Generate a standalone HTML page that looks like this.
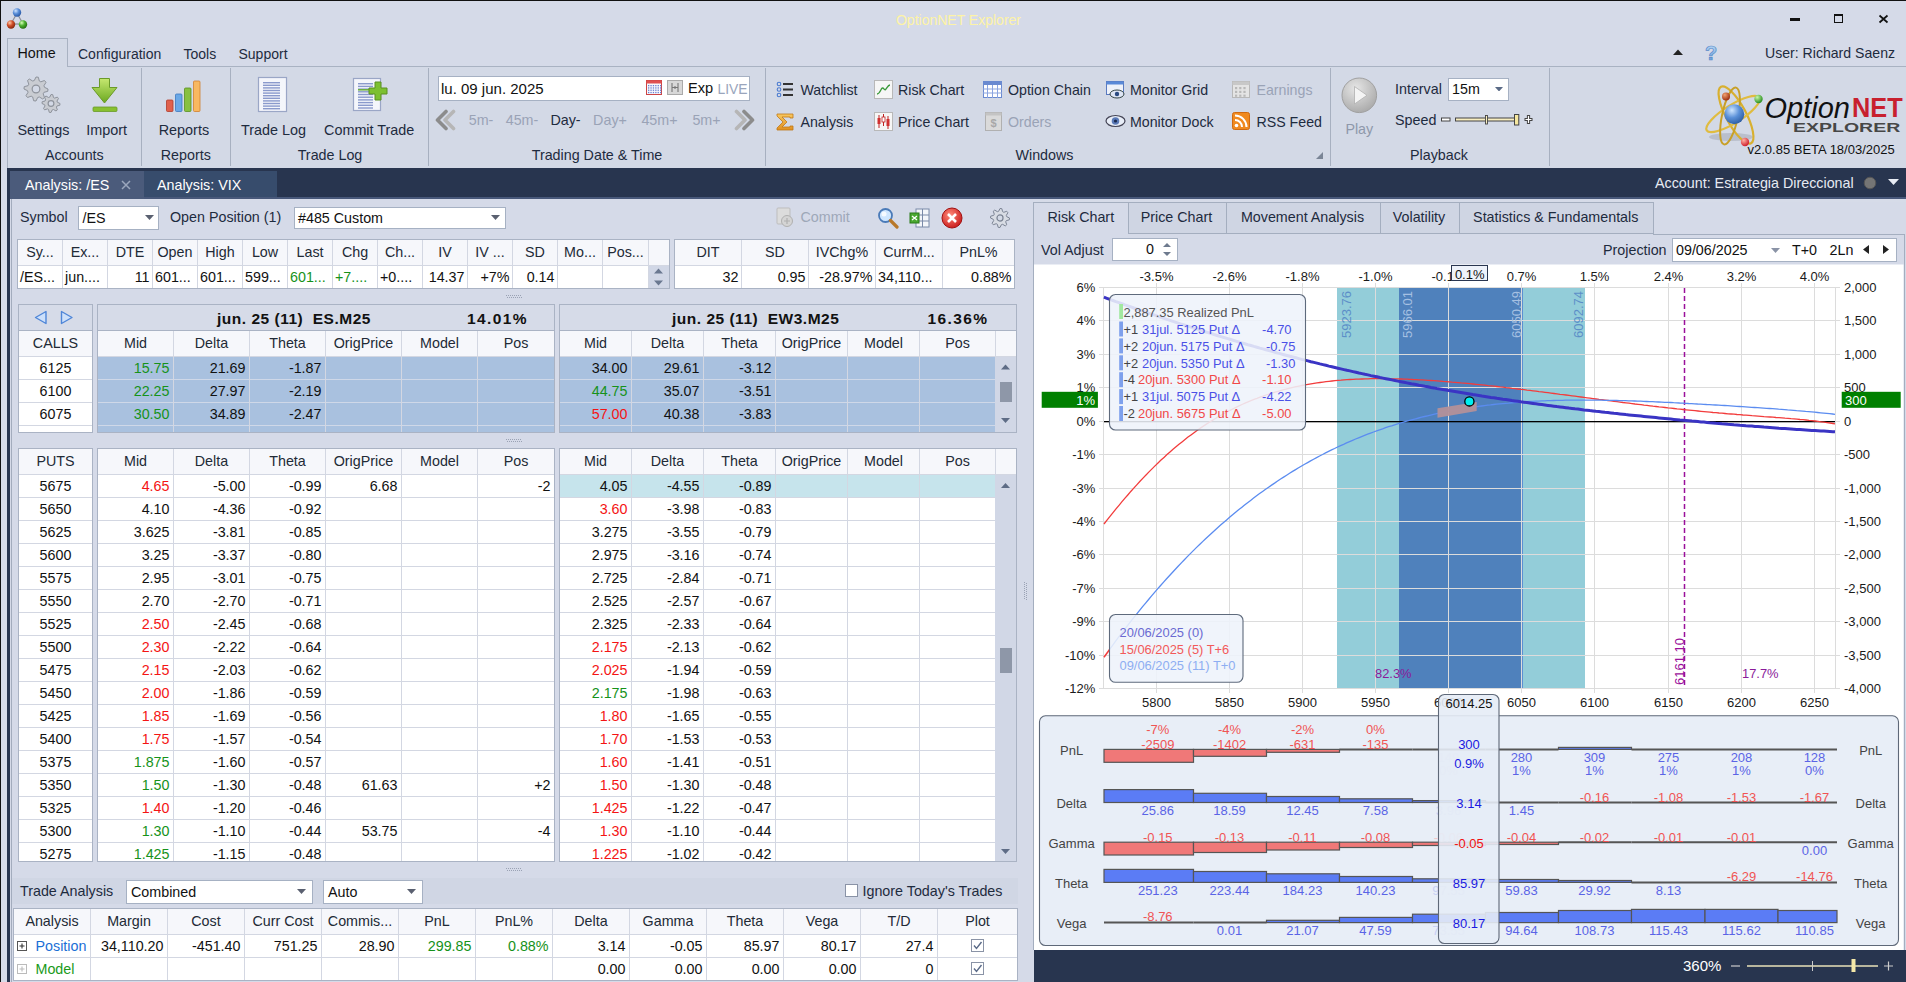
<!DOCTYPE html>
<html><head><meta charset="utf-8"><title>OptionNET Explorer</title>
<style>
html,body{margin:0;padding:0;}
body{width:1906px;height:982px;overflow:hidden;position:relative;background:#d6dbe8;font-family:"Liberation Sans", sans-serif;}
div{box-sizing:border-box;}
svg text{font-family:"Liberation Sans", sans-serif;}
</style></head><body>
<div style="position:absolute;left:0px;top:0px;width:1906px;height:1px;background:#101010;box-sizing:border-box;"></div><div style="position:absolute;left:0px;top:0px;width:1px;height:982px;background:#101010;box-sizing:border-box;"></div><div style="position:absolute;left:1px;top:1px;width:1905px;height:166px;background:#d5dae8;box-sizing:border-box;"></div><svg style="position:absolute;left:8px;top:6px;overflow:visible" width="22" height="24" viewBox="0 0 22 24">
<line x1="9" y1="7" x2="3" y2="18" stroke="#8a8f98" stroke-width="1.2"/>
<line x1="9" y1="7" x2="15" y2="18" stroke="#8a8f98" stroke-width="1.2"/>
<line x1="3" y1="18" x2="15" y2="18" stroke="#8a8f98" stroke-width="1.2"/>
<defs>
<radialGradient id="gb" cx="0.35" cy="0.3" r="0.7"><stop offset="0" stop-color="#cfe4ff"/><stop offset="0.5" stop-color="#5b8fd8"/><stop offset="1" stop-color="#2a5aa8"/></radialGradient>
<radialGradient id="gr" cx="0.35" cy="0.3" r="0.7"><stop offset="0" stop-color="#ffc9a8"/><stop offset="0.5" stop-color="#d0502a"/><stop offset="1" stop-color="#8a2a10"/></radialGradient>
<radialGradient id="gg" cx="0.35" cy="0.3" r="0.7"><stop offset="0" stop-color="#d8ffb8"/><stop offset="0.5" stop-color="#4cb030"/><stop offset="1" stop-color="#267010"/></radialGradient>
</defs>
<circle cx="9" cy="6.5" r="4.2" fill="url(#gb)"/>
<circle cx="3" cy="18.5" r="4.2" fill="url(#gr)"/>
<circle cx="15" cy="18.5" r="4.2" fill="url(#gg)"/>
</svg><div style="position:absolute;top:11.6px;font-size:14px;line-height:16.8px;color:#fdf3a6;white-space:nowrap;left:808.5px;width:300px;text-align:center;">OptionNET Explorer</div><div style="position:absolute;left:1790px;top:18px;width:10px;height:3px;background:#111;box-sizing:border-box;"></div><div style="position:absolute;left:1834px;top:14px;width:9px;height:9px;background:none;box-sizing:border-box;border:1.5px solid #111;border-top-width:2.5px"></div><svg style="position:absolute;left:1878px;top:13.5px;" width="11" height="10" viewBox="0 0 11 10"><path d="M1.5 1.5 L9.5 8.5 M9.5 1.5 L1.5 8.5" stroke="#111" stroke-width="1.7"/></svg><div style="position:absolute;left:7px;top:66px;width:1899px;height:1px;background:#a9b2c2;box-sizing:border-box;"></div><div style="position:absolute;left:7px;top:38px;width:61px;height:30px;background:#d3d9e6;box-sizing:border-box;border:1px solid #a9b2c2;border-bottom:none"></div><div style="position:absolute;top:45.4px;font-size:14.3px;line-height:17.2px;color:#111;white-space:nowrap;left:17.5px;">Home</div><div style="position:absolute;top:45.6px;font-size:14px;line-height:16.8px;color:#1e2b3e;white-space:nowrap;left:78px;">Configuration</div><div style="position:absolute;top:45.6px;font-size:14px;line-height:16.8px;color:#1e2b3e;white-space:nowrap;left:183.5px;">Tools</div><div style="position:absolute;top:45.6px;font-size:14px;line-height:16.8px;color:#1e2b3e;white-space:nowrap;left:238.5px;">Support</div><svg style="position:absolute;left:1673px;top:49px;" width="10" height="6" viewBox="0 0 10 6"><path d="M0 6 L5 0.5 L10 6 Z" fill="#222"/></svg><svg style="position:absolute;left:1702px;top:43px;" width="18" height="20" viewBox="0 0 18 20"><defs><linearGradient id="gq" x1="0" y1="0" x2="0" y2="1"><stop offset="0" stop-color="#c8e2fa"/><stop offset="1" stop-color="#5a96d8"/></linearGradient></defs><text x="9" y="16.5" font-size="20" font-weight="bold" text-anchor="middle" fill="url(#gq)" stroke="#5a8ac8" stroke-width="0.7">?</text></svg><div style="position:absolute;top:44.9px;font-size:14.1px;line-height:16.9px;color:#1e2b3e;white-space:nowrap;left:1765px;">User: Richard Saenz</div><div style="position:absolute;left:7px;top:67px;width:1899px;height:101px;background:#d3d9e6;box-sizing:border-box;"></div><div style="position:absolute;left:7px;top:66px;width:1px;height:102px;background:#a9b2c2;box-sizing:border-box;"></div><div style="position:absolute;left:141px;top:68px;width:1px;height:98px;background:#a7b0c0;box-sizing:border-box;"></div><div style="position:absolute;left:230px;top:68px;width:1px;height:98px;background:#a7b0c0;box-sizing:border-box;"></div><div style="position:absolute;left:428px;top:68px;width:1px;height:98px;background:#a7b0c0;box-sizing:border-box;"></div><div style="position:absolute;left:765px;top:68px;width:1px;height:98px;background:#a7b0c0;box-sizing:border-box;"></div><div style="position:absolute;left:1330px;top:68px;width:1px;height:98px;background:#a7b0c0;box-sizing:border-box;"></div><div style="position:absolute;left:1549px;top:68px;width:1px;height:98px;background:#a7b0c0;box-sizing:border-box;"></div><div style="position:absolute;top:147.4px;font-size:14.3px;line-height:17.2px;color:#1e2b3e;white-space:nowrap;left:-25.700000000000003px;width:200px;text-align:center;">Accounts</div><div style="position:absolute;top:147.4px;font-size:14.3px;line-height:17.2px;color:#1e2b3e;white-space:nowrap;left:85.80000000000001px;width:200px;text-align:center;">Reports</div><div style="position:absolute;top:147.4px;font-size:14.3px;line-height:17.2px;color:#1e2b3e;white-space:nowrap;left:230.0px;width:200px;text-align:center;">Trade Log</div><div style="position:absolute;top:147.4px;font-size:14.3px;line-height:17.2px;color:#1e2b3e;white-space:nowrap;left:497.0px;width:200px;text-align:center;">Trading Date &amp; Time</div><div style="position:absolute;top:147.4px;font-size:14.3px;line-height:17.2px;color:#1e2b3e;white-space:nowrap;left:944.5px;width:200px;text-align:center;">Windows</div><div style="position:absolute;top:147.4px;font-size:14.3px;line-height:17.2px;color:#1e2b3e;white-space:nowrap;left:1339.0px;width:200px;text-align:center;">Playback</div><div style="position:absolute;top:121.5px;font-size:14.4px;line-height:17.3px;color:#1e2b3e;white-space:nowrap;left:-56.5px;width:200px;text-align:center;">Settings</div><div style="position:absolute;top:121.5px;font-size:14.4px;line-height:17.3px;color:#1e2b3e;white-space:nowrap;left:6.700000000000003px;width:200px;text-align:center;">Import</div><div style="position:absolute;top:121.5px;font-size:14.4px;line-height:17.3px;color:#1e2b3e;white-space:nowrap;left:83.9px;width:200px;text-align:center;">Reports</div><div style="position:absolute;top:121.5px;font-size:14.4px;line-height:17.3px;color:#1e2b3e;white-space:nowrap;left:173.5px;width:200px;text-align:center;">Trade Log</div><div style="position:absolute;top:121.5px;font-size:14.4px;line-height:17.3px;color:#1e2b3e;white-space:nowrap;left:269.2px;width:200px;text-align:center;">Commit Trade</div><svg style="position:absolute;left:22px;top:75px;" width="42" height="42" viewBox="0 0 42 42"><polygon points="26.00,14.00 25.77,16.34 21.98,17.31 21.18,18.80 22.49,22.49 20.67,23.98 17.31,21.98 15.69,22.47 14.00,26.00 11.66,25.77 10.69,21.98 9.20,21.18 5.51,22.49 4.02,20.67 6.02,17.31 5.53,15.69 2.00,14.00 2.23,11.66 6.02,10.69 6.82,9.20 5.51,5.51 7.33,4.02 10.69,6.02 12.31,5.53 14.00,2.00 16.34,2.23 17.31,6.02 18.80,6.82 22.49,5.51 23.98,7.33 21.98,10.69 22.47,12.31" fill="#c9ccd2" stroke="#8e939c" stroke-width="1"/><circle cx="14" cy="14" r="3.84" fill="#d3d9e6" stroke="#8e939c" stroke-width="1.2"/><polygon points="38.00,28.50 37.83,30.26 34.99,30.98 34.39,32.10 35.36,34.86 34.00,35.98 31.48,34.49 30.26,34.86 29.00,37.50 27.24,37.33 26.52,34.49 25.40,33.89 22.64,34.86 21.52,33.50 23.01,30.98 22.64,29.76 20.00,28.50 20.17,26.74 23.01,26.02 23.61,24.90 22.64,22.14 24.00,21.02 26.52,22.51 27.74,22.14 29.00,19.50 30.76,19.67 31.48,22.51 32.60,23.11 35.36,22.14 36.48,23.50 34.99,26.02 35.36,27.24" fill="#c9ccd2" stroke="#8e939c" stroke-width="1"/><circle cx="29" cy="28.5" r="2.88" fill="#d3d9e6" stroke="#8e939c" stroke-width="1.2"/></svg><svg style="position:absolute;left:90px;top:76px;" width="30" height="38" viewBox="0 0 30 38"><defs><linearGradient id="ga" x1="0" y1="0" x2="0" y2="1"><stop offset="0" stop-color="#c6e870"/><stop offset="1" stop-color="#6aa820"/></linearGradient></defs>
<path d="M9.5 2.5 H19.5 V11.5 H27 L14.5 27 L2 11.5 H9.5 Z" fill="url(#ga)" stroke="#6a9a28" stroke-width="1"/>
<rect x="3" y="31" width="24" height="4.5" rx="1" fill="#88c030" stroke="#6a9a28" stroke-width="0.8"/></svg><svg style="position:absolute;left:164px;top:77px;" width="40" height="38" viewBox="0 0 40 38">
<rect x="2.5" y="23" width="6.5" height="11.5" rx="1" fill="#e0604c" stroke="#b03a2a" stroke-width="0.8"/>
<rect x="11.5" y="17" width="6.5" height="17.5" rx="1" fill="#6aa8e6" stroke="#3c78c0" stroke-width="0.8"/>
<rect x="20.5" y="11" width="6.5" height="23.5" rx="1" fill="#88c040" stroke="#5a9020" stroke-width="0.8"/>
<rect x="29.5" y="4" width="6.5" height="30.5" rx="1" fill="#f8b860" stroke="#d08030" stroke-width="0.8"/></svg><svg style="position:absolute;left:257px;top:76px;" width="32" height="38" viewBox="0 0 32 38"><rect x="1.5" y="1.5" width="28" height="34" fill="#f4f6fb" stroke="#9aa6c6" stroke-width="1.2"/><rect x="6" y="6.0" width="17" height="1.4" fill="#8a9acc"/><rect x="6" y="8.6" width="17" height="1.4" fill="#8a9acc"/><rect x="6" y="11.2" width="17" height="1.4" fill="#8a9acc"/><rect x="6" y="13.8" width="17" height="1.4" fill="#8a9acc"/><rect x="6" y="16.4" width="17" height="1.4" fill="#8a9acc"/><rect x="6" y="19.0" width="17" height="1.4" fill="#8a9acc"/><rect x="6" y="21.6" width="17" height="1.4" fill="#8a9acc"/><rect x="6" y="24.2" width="17" height="1.4" fill="#8a9acc"/><rect x="6" y="26.8" width="17" height="1.4" fill="#8a9acc"/><rect x="6" y="29.4" width="17" height="1.4" fill="#8a9acc"/><rect x="6" y="32.0" width="17" height="1.4" fill="#8a9acc"/></svg><svg style="position:absolute;left:352px;top:76px;" width="38" height="38" viewBox="0 0 38 38"><rect x="1.5" y="2.5" width="27" height="32" fill="#f4f6fb" stroke="#9aa6c6" stroke-width="1.2"/><rect x="6" y="7.0" width="15" height="1.4" fill="#8a9acc"/><rect x="6" y="9.7" width="15" height="1.4" fill="#8a9acc"/><rect x="6" y="12.4" width="15" height="1.4" fill="#8a9acc"/><rect x="6" y="15.1" width="15" height="1.4" fill="#8a9acc"/><rect x="6" y="17.8" width="15" height="1.4" fill="#8a9acc"/><rect x="6" y="20.5" width="15" height="1.4" fill="#8a9acc"/><rect x="6" y="23.2" width="15" height="1.4" fill="#8a9acc"/><rect x="6" y="25.9" width="15" height="1.4" fill="#8a9acc"/><rect x="6" y="28.6" width="15" height="1.4" fill="#8a9acc"/><rect x="6" y="31.3" width="15" height="1.4" fill="#8a9acc"/>
<rect x="6" y="13" width="12" height="1.6" fill="#6ab040"/>
<path d="M23 6 H29 V12 H35 V18 H29 V24 H23 V18 H17 V12 H23 Z" fill="#7cc030" stroke="#5a9020" stroke-width="1"/></svg><div style="position:absolute;left:438px;top:76px;width:312px;height:25px;background:#fff;box-sizing:border-box;border:1px solid #a6b1c3;"></div><div style="position:absolute;top:80.0px;font-size:15px;line-height:18.0px;color:#111;white-space:nowrap;left:441px;">lu. 09 jun. 2025</div><svg style="position:absolute;left:646px;top:80px;" width="16" height="15" viewBox="0 0 16 15"><rect x="0.5" y="0.5" width="15" height="14" fill="#f8f8fc" stroke="#c44" stroke-width="1"/><rect x="0.5" y="0.5" width="15" height="3" fill="#e05050"/><rect x="2.0" y="5.0" width="1.3" height="1.3" fill="#6a7fd0"/><rect x="4.4" y="5.0" width="1.3" height="1.3" fill="#6a7fd0"/><rect x="6.8" y="5.0" width="1.3" height="1.3" fill="#6a7fd0"/><rect x="9.2" y="5.0" width="1.3" height="1.3" fill="#6a7fd0"/><rect x="11.6" y="5.0" width="1.3" height="1.3" fill="#6a7fd0"/><rect x="14.0" y="5.0" width="1.3" height="1.3" fill="#6a7fd0"/><rect x="2.0" y="7.3" width="1.3" height="1.3" fill="#6a7fd0"/><rect x="4.4" y="7.3" width="1.3" height="1.3" fill="#6a7fd0"/><rect x="6.8" y="7.3" width="1.3" height="1.3" fill="#6a7fd0"/><rect x="9.2" y="7.3" width="1.3" height="1.3" fill="#6a7fd0"/><rect x="11.6" y="7.3" width="1.3" height="1.3" fill="#6a7fd0"/><rect x="14.0" y="7.3" width="1.3" height="1.3" fill="#6a7fd0"/><rect x="2.0" y="9.6" width="1.3" height="1.3" fill="#6a7fd0"/><rect x="4.4" y="9.6" width="1.3" height="1.3" fill="#6a7fd0"/><rect x="6.8" y="9.6" width="1.3" height="1.3" fill="#6a7fd0"/><rect x="9.2" y="9.6" width="1.3" height="1.3" fill="#6a7fd0"/><rect x="11.6" y="9.6" width="1.3" height="1.3" fill="#6a7fd0"/><rect x="14.0" y="9.6" width="1.3" height="1.3" fill="#6a7fd0"/><rect x="2.0" y="11.9" width="1.3" height="1.3" fill="#6a7fd0"/><rect x="4.4" y="11.9" width="1.3" height="1.3" fill="#6a7fd0"/><rect x="6.8" y="11.9" width="1.3" height="1.3" fill="#6a7fd0"/><rect x="9.2" y="11.9" width="1.3" height="1.3" fill="#6a7fd0"/><rect x="11.6" y="11.9" width="1.3" height="1.3" fill="#6a7fd0"/><rect x="14.0" y="11.9" width="1.3" height="1.3" fill="#6a7fd0"/></svg><svg style="position:absolute;left:667px;top:80px;" width="16" height="15" viewBox="0 0 16 15"><rect x="0.5" y="0.5" width="15" height="14" fill="#d8d8d8" stroke="#aaa" stroke-width="1"/><path d="M5 3 V12 M8 6 V9 M11 3 V12 M5 7.5 H11" stroke="#777" stroke-width="1.1"/></svg><div style="position:absolute;top:80.2px;font-size:14.6px;line-height:17.5px;color:#111;white-space:nowrap;left:688px;">Exp</div><div style="position:absolute;top:80.7px;font-size:13.9px;line-height:16.7px;color:#9aa5bc;white-space:nowrap;left:717.5px;">LIVE</div><svg style="position:absolute;left:434px;top:109px;" width="23" height="22" viewBox="0 0 23 22"><path d="M12 2.5 L3.5 11 L12 19.5" fill="none" stroke="#8c8c8c" stroke-width="3.6" stroke-linecap="round" stroke-linejoin="round"/><path d="M19.5 2.5 L11 11 L19.5 19.5" fill="none" stroke="#b6b6b6" stroke-width="3.6" stroke-linecap="round" stroke-linejoin="round"/></svg><svg style="position:absolute;left:733px;top:109px;transform:scaleX(-1)" width="23" height="22" viewBox="0 0 23 22"><path d="M12 2.5 L3.5 11 L12 19.5" fill="none" stroke="#8c8c8c" stroke-width="3.6" stroke-linecap="round" stroke-linejoin="round"/><path d="M19.5 2.5 L11 11 L19.5 19.5" fill="none" stroke="#b6b6b6" stroke-width="3.6" stroke-linecap="round" stroke-linejoin="round"/></svg><div style="position:absolute;top:112.4px;font-size:14.3px;line-height:17.2px;color:#9aa3b6;white-space:nowrap;left:441.0px;width:80px;text-align:center;">5m-</div><div style="position:absolute;top:112.4px;font-size:14.3px;line-height:17.2px;color:#9aa3b6;white-space:nowrap;left:482.0px;width:80px;text-align:center;">45m-</div><div style="position:absolute;top:112.4px;font-size:14.3px;line-height:17.2px;color:#1e2b3e;white-space:nowrap;left:525.5px;width:80px;text-align:center;">Day-</div><div style="position:absolute;top:112.4px;font-size:14.3px;line-height:17.2px;color:#9aa3b6;white-space:nowrap;left:570.0px;width:80px;text-align:center;">Day+</div><div style="position:absolute;top:112.4px;font-size:14.3px;line-height:17.2px;color:#9aa3b6;white-space:nowrap;left:619.5px;width:80px;text-align:center;">45m+</div><div style="position:absolute;top:112.4px;font-size:14.3px;line-height:17.2px;color:#9aa3b6;white-space:nowrap;left:666.5px;width:80px;text-align:center;">5m+</div><svg style="position:absolute;left:776px;top:81px;" width="19" height="17" viewBox="0 0 19 17"><circle cx="3" cy="3.0" r="1.8" fill="none" stroke="#4a7ad0" stroke-width="1.1"/><rect x="7" y="2.0" width="10" height="2" fill="#333"/><circle cx="3" cy="8.5" r="1.8" fill="none" stroke="#4a7ad0" stroke-width="1.1"/><rect x="7" y="7.5" width="10" height="2" fill="#333"/><circle cx="3" cy="14.0" r="1.8" fill="none" stroke="#4a7ad0" stroke-width="1.1"/><rect x="7" y="13.0" width="10" height="2" fill="#333"/></svg><svg style="position:absolute;left:874px;top:80px;" width="19" height="19" viewBox="0 0 19 19"><rect x="0.5" y="0.5" width="18" height="18" fill="#f6f6f6" stroke="#b8b8b8"/><path d="M3 14 C7 14 7 5 10 9 C12 12 13 5 16 5" fill="none" stroke="#3a9a3a" stroke-width="1.3"/></svg><svg style="position:absolute;left:983px;top:81px;" width="19" height="17" viewBox="0 0 19 17"><rect x="0.5" y="0.5" width="18" height="16" fill="#fff" stroke="#6a8ad0"/><rect x="0.5" y="0.5" width="18" height="3.5" fill="#6a8ad0"/><path d="M4.5 4 V17" stroke="#8aa4e0" stroke-width="1"/><path d="M9.5 4 V17" stroke="#8aa4e0" stroke-width="1"/><path d="M14.5 4 V17" stroke="#8aa4e0" stroke-width="1"/><path d="M0 8 H19" stroke="#8aa4e0" stroke-width="1"/><path d="M0 12 H19" stroke="#8aa4e0" stroke-width="1"/></svg><svg style="position:absolute;left:1106px;top:80px;" width="19" height="19" viewBox="0 0 19 19"><rect x="0.5" y="1.5" width="17" height="13" fill="#eef2fa" stroke="#5a7ac0"/><rect x="0.5" y="1.5" width="17" height="3" fill="#5a8ad8"/><ellipse cx="11" cy="14" rx="7" ry="4" fill="#dfe6f5" stroke="#344" stroke-width="1"/><circle cx="11" cy="14" r="2.2" fill="#2a4a80"/></svg><svg style="position:absolute;left:1232px;top:81px;" width="18" height="17" viewBox="0 0 18 17"><rect x="0.5" y="0.5" width="17" height="16" fill="#e4e4e4" stroke="#b8b8b8"/><rect x="0.5" y="0.5" width="17" height="3.5" fill="#c8c8c8"/><rect x="3.0" y="6.0" width="2.2" height="2.2" fill="#b8b8b8"/><rect x="7.2" y="6.0" width="2.2" height="2.2" fill="#b8b8b8"/><rect x="11.4" y="6.0" width="2.2" height="2.2" fill="#b8b8b8"/><rect x="3.0" y="9.8" width="2.2" height="2.2" fill="#b8b8b8"/><rect x="7.2" y="9.8" width="2.2" height="2.2" fill="#b8b8b8"/><rect x="11.4" y="9.8" width="2.2" height="2.2" fill="#b8b8b8"/><rect x="3.0" y="13.6" width="2.2" height="2.2" fill="#b8b8b8"/><rect x="7.2" y="13.6" width="2.2" height="2.2" fill="#b8b8b8"/><rect x="11.4" y="13.6" width="2.2" height="2.2" fill="#b8b8b8"/></svg><svg style="position:absolute;left:776px;top:113px;" width="19" height="18" viewBox="0 0 19 18"><defs><linearGradient id="gs" x1="0" y1="0" x2="0" y2="1"><stop offset="0" stop-color="#f8c860"/><stop offset="1" stop-color="#e09020"/></linearGradient></defs><path d="M1 1 H17 V5 H14 L14 4 H6 L11 9 L6 14 H14 V13 H17 V17 H1 V15 L7 9 L1 3 Z" fill="url(#gs)" stroke="#c07818" stroke-width="0.8"/></svg><svg style="position:absolute;left:874px;top:112px;" width="19" height="19" viewBox="0 0 19 19"><rect x="0.5" y="0.5" width="18" height="18" fill="#f6f6f6" stroke="#b8b8b8"/><path d="M5 3 V16 M9.5 2 V14 M14 4 V17" stroke="#c02020" stroke-width="1"/><rect x="3.5" y="6" width="3" height="6" fill="#d03030"/><rect x="8" y="5" width="3" height="5" fill="#fff" stroke="#c02020" stroke-width="0.8"/><rect x="12.5" y="7" width="3" height="7" fill="#d03030"/></svg><svg style="position:absolute;left:985px;top:112px;" width="17" height="19" viewBox="0 0 17 19"><rect x="0.5" y="0.5" width="16" height="18" fill="#dadada" stroke="#b0b0b0"/><rect x="0.5" y="0.5" width="16" height="3" fill="#c4c4c4"/><text x="8.5" y="15" font-size="11" font-weight="bold" text-anchor="middle" fill="#a8a8a8">$</text></svg><svg style="position:absolute;left:1105px;top:114px;" width="21" height="14" viewBox="0 0 21 14"><ellipse cx="10.5" cy="7" rx="9.5" ry="5.5" fill="#e8eef8" stroke="#445" stroke-width="1.2"/><circle cx="10.5" cy="7" r="3.8" fill="#5a7ab8"/><circle cx="10.5" cy="7" r="1.6" fill="#1a2a50"/></svg><svg style="position:absolute;left:1232px;top:112px;" width="18" height="18" viewBox="0 0 18 18"><rect x="0.5" y="0.5" width="17" height="17" rx="2" fill="#f08a20" stroke="#d06a10"/><circle cx="4.5" cy="13.5" r="1.8" fill="#fff"/><path d="M3 8 A7 7 0 0 1 10 15 M3 3.5 A11.5 11.5 0 0 1 14.5 15" fill="none" stroke="#fff" stroke-width="2"/></svg><div style="position:absolute;top:81.5px;font-size:14.2px;line-height:17.0px;color:#1e2b3e;white-space:nowrap;left:800.5px;">Watchlist</div><div style="position:absolute;top:81.5px;font-size:14.2px;line-height:17.0px;color:#1e2b3e;white-space:nowrap;left:898px;">Risk Chart</div><div style="position:absolute;top:81.5px;font-size:14.2px;line-height:17.0px;color:#1e2b3e;white-space:nowrap;left:1008px;">Option Chain</div><div style="position:absolute;top:81.5px;font-size:14.2px;line-height:17.0px;color:#1e2b3e;white-space:nowrap;left:1130px;">Monitor Grid</div><div style="position:absolute;top:81.5px;font-size:14.2px;line-height:17.0px;color:#9aa3b6;white-space:nowrap;left:1256.5px;">Earnings</div><div style="position:absolute;top:113.8px;font-size:14.2px;line-height:17.0px;color:#1e2b3e;white-space:nowrap;left:800.5px;">Analysis</div><div style="position:absolute;top:113.8px;font-size:14.2px;line-height:17.0px;color:#1e2b3e;white-space:nowrap;left:898px;">Price Chart</div><div style="position:absolute;top:113.8px;font-size:14.2px;line-height:17.0px;color:#9aa3b6;white-space:nowrap;left:1008px;">Orders</div><div style="position:absolute;top:113.8px;font-size:14.2px;line-height:17.0px;color:#1e2b3e;white-space:nowrap;left:1130px;">Monitor Dock</div><div style="position:absolute;top:113.8px;font-size:14.2px;line-height:17.0px;color:#1e2b3e;white-space:nowrap;left:1256.5px;">RSS Feed</div><svg style="position:absolute;left:1316px;top:152px;" width="7" height="7" viewBox="0 0 7 7"><path d="M7 0 V7 H0 Z" fill="#7a8596"/></svg><svg style="position:absolute;left:1545px;top:152px;display:none" width="7" height="7" viewBox="0 0 7 7"><path d="M7 0 V7 H0 Z" fill="#7a8596"/></svg><svg style="position:absolute;left:1341px;top:77px;" width="37" height="37" viewBox="0 0 37 37"><defs><radialGradient id="gp" cx="0.4" cy="0.3" r="0.75"><stop offset="0" stop-color="#e6e6e6"/><stop offset="1" stop-color="#a8a8a8"/></radialGradient></defs>
<circle cx="18.3" cy="18.3" r="17.3" fill="url(#gp)" stroke="#a0a0a0" stroke-width="1"/><path d="M13.5 9.5 L26 18.3 L13.5 27 Z" fill="#f4f4f4" stroke="#b0b0b0" stroke-width="0.8"/></svg><div style="position:absolute;top:121.2px;font-size:14.3px;line-height:17.2px;color:#8e98aa;white-space:nowrap;left:1329.3px;width:60px;text-align:center;">Play</div><div style="position:absolute;top:81.1px;font-size:14.3px;line-height:17.2px;color:#1e2b3e;white-space:nowrap;left:1395px;">Interval</div><div style="position:absolute;left:1447.5px;top:77.5px;width:61px;height:23.5px;background:#fff;box-sizing:border-box;border:1px solid #a6b1c3;"></div><div style="position:absolute;top:81.1px;font-size:14.3px;line-height:17.2px;color:#111;white-space:nowrap;left:1452px;">15m</div><svg style="position:absolute;left:1494.5px;top:86.5px;" width="8" height="4.5" viewBox="0 0 8 4.5"><path d="M0 0 H8 L4 4.5 Z" fill="#5a6a86"/></svg><div style="position:absolute;top:111.9px;font-size:14.3px;line-height:17.2px;color:#1e2b3e;white-space:nowrap;left:1395px;">Speed</div><svg style="position:absolute;left:1440px;top:112px;" width="95" height="15" viewBox="0 0 95 15"><rect x="1.5" y="6" width="8.5" height="3" fill="#fff" stroke="#444" stroke-width="1"/>
<rect x="15.5" y="6" width="63" height="3" fill="#f8eec0" stroke="#444" stroke-width="1"/>
<rect x="45.5" y="3.5" width="2" height="8.5" fill="#f8eec0" stroke="#444" stroke-width="0.9"/>
<rect x="74.5" y="2.5" width="4.3" height="10.5" fill="#f6e8a0" stroke="#444" stroke-width="1"/>
<path d="M84.5 7.5 H92.5 M88.5 3 V12" stroke="#444" stroke-width="3.2"/><path d="M85.5 7.5 H91.5 M88.5 4 V11" stroke="#fff" stroke-width="1.2"/></svg><svg style="position:absolute;left:1700px;top:78px;" width="70" height="72" viewBox="0 0 70 72"><defs><radialGradient id="gn" cx="0.38" cy="0.3" r="0.75"><stop offset="0" stop-color="#cfe6ff"/><stop offset="0.5" stop-color="#5a90d8"/><stop offset="1" stop-color="#2a5aa0"/></radialGradient>
<radialGradient id="gr2" cx="0.35" cy="0.3" r="0.7"><stop offset="0" stop-color="#ffb0a0"/><stop offset="1" stop-color="#d02030"/></radialGradient>
<radialGradient id="gr3" cx="0.35" cy="0.3" r="0.7"><stop offset="0" stop-color="#f0a070"/><stop offset="1" stop-color="#a03010"/></radialGradient>
<radialGradient id="gg2" cx="0.35" cy="0.3" r="0.7"><stop offset="0" stop-color="#c8f8a8"/><stop offset="1" stop-color="#2a9020"/></radialGradient></defs>
<ellipse cx="31" cy="59" rx="22" ry="4" fill="#8a8f9a" opacity="0.35"/>
<ellipse cx="36" cy="37" rx="10" ry="32" fill="none" stroke="#d8b030" stroke-width="2.2" transform="rotate(-28 36 37)"/>
<ellipse cx="33" cy="36" rx="31" ry="9" fill="none" stroke="#e0bc40" stroke-width="2.2" transform="rotate(-32 33 36)"/>
<ellipse cx="30" cy="38" rx="8" ry="29" fill="none" stroke="#c8a028" stroke-width="2" transform="rotate(12 30 38)"/>
<circle cx="34.3" cy="36.3" r="10" fill="url(#gn)"/>
<circle cx="26" cy="18.5" r="4" fill="url(#gr3)"/>
<circle cx="58.5" cy="21" r="4.2" fill="url(#gg2)"/>
<circle cx="45" cy="64" r="4.2" fill="url(#gr2)"/>
</svg><div style="position:absolute;left:1764.5px;top:90.5px;font-size:29px;line-height:34px;font-style:italic;color:#111;white-space:nowrap">Option</div><div style="position:absolute;left:1851.5px;top:89.5px;font-size:28.5px;line-height:34px;font-weight:bold;color:#c8202e;white-space:nowrap;transform:scaleX(0.888);transform-origin:0 0">NET</div><div style="position:absolute;left:1793px;top:120.5px;font-size:12.5px;line-height:15px;color:#474747;font-weight:bold;white-space:nowrap;transform:scaleX(1.56);transform-origin:0 0">EXPLORER</div><div style="position:absolute;top:142.2px;font-size:13px;line-height:15.6px;color:#111;white-space:nowrap;left:1747.5px;">v2.0.85 BETA 18/03/2025</div><div style="position:absolute;left:7px;top:167.5px;width:1899px;height:30px;background:#28354f;box-sizing:border-box;"></div><div style="position:absolute;left:10px;top:197px;width:1896px;height:2px;background:#48587a;box-sizing:border-box;"></div><div style="position:absolute;left:10px;top:171px;width:134px;height:27.5px;background:#4b5b7b;box-sizing:border-box;"></div><div style="position:absolute;left:144px;top:171px;width:133px;height:26px;background:#374c6c;box-sizing:border-box;"></div><div style="position:absolute;top:176.7px;font-size:14.3px;line-height:17.2px;color:#fff;white-space:nowrap;left:25px;">Analysis: /ES</div><svg style="position:absolute;left:121px;top:180px;" width="10" height="10" viewBox="0 0 10 10"><path d="M1 1 L9 9 M9 1 L1 9" stroke="#9ba7bd" stroke-width="1.5"/></svg><div style="position:absolute;top:176.7px;font-size:14.3px;line-height:17.2px;color:#fff;white-space:nowrap;left:157px;">Analysis: VIX</div><div style="position:absolute;top:174.9px;font-size:14.3px;line-height:17.2px;color:#e6eaf2;white-space:nowrap;left:1655px;">Account: Estrategia Direccional</div><svg style="position:absolute;left:1863px;top:176px;" width="14" height="14" viewBox="0 0 14 14"><circle cx="7" cy="7" r="5.8" fill="#757575" stroke="#555" stroke-width="1"/></svg><svg style="position:absolute;left:1888px;top:179px;" width="11" height="7" viewBox="0 0 11 7"><path d="M0 0 H11 L5.5 6 Z" fill="#e8ecf4"/></svg><div style="position:absolute;left:7px;top:198px;width:3px;height:784px;background:#28354f;box-sizing:border-box;"></div><div style="position:absolute;left:10px;top:199px;width:1023px;height:783px;background:#d5dae8;box-sizing:border-box;"></div><div style="position:absolute;left:11px;top:199px;width:1px;height:783px;background:#a3acbd;box-sizing:border-box;"></div><div style="position:absolute;top:209.4px;font-size:14.3px;line-height:17.2px;color:#1e2b3e;white-space:nowrap;left:20px;">Symbol</div><div style="position:absolute;left:78px;top:206px;width:81px;height:24px;background:#fff;box-sizing:border-box;border:1px solid #a6b1c3;"></div><div style="position:absolute;top:210.4px;font-size:14.3px;line-height:17.2px;color:#111;white-space:nowrap;left:82.5px;">/ES</div><svg style="position:absolute;left:145px;top:215px;" width="9" height="5" viewBox="0 0 9 5"><path d="M0 0 H9 L4.5 5 Z" fill="#5a6070"/></svg><div style="position:absolute;top:209.4px;font-size:14.3px;line-height:17.2px;color:#1e2b3e;white-space:nowrap;left:170px;">Open Position (1)</div><div style="position:absolute;left:294px;top:207px;width:212px;height:22px;background:#fff;box-sizing:border-box;border:1px solid #a6b1c3;"></div><div style="position:absolute;top:210.4px;font-size:14.3px;line-height:17.2px;color:#111;white-space:nowrap;left:298px;">#485 Custom</div><svg style="position:absolute;left:491px;top:215px;" width="9" height="5" viewBox="0 0 9 5"><path d="M0 0 H9 L4.5 5 Z" fill="#5a6070"/></svg><svg style="position:absolute;left:776px;top:207px;" width="18" height="21" viewBox="0 0 18 21"><rect x="1" y="1" width="13" height="16" rx="1" fill="#dcdcdc" stroke="#bdbdbd"/><circle cx="11" cy="14" r="5.5" fill="#d4d4d4" stroke="#b0b0b0"/><path d="M11 11 V17 M8 14 H14" stroke="#b0b0b0" stroke-width="1.2"/></svg><div style="position:absolute;top:209.4px;font-size:14.3px;line-height:17.2px;color:#9ea8b8;white-space:nowrap;left:800.5px;">Commit</div><svg style="position:absolute;left:877px;top:207px;" width="22" height="22" viewBox="0 0 22 22"><circle cx="8.5" cy="8.5" r="6.5" fill="#cfe6ff" stroke="#4a7ab8" stroke-width="1.8"/><circle cx="7" cy="7" r="2.5" fill="#fff" opacity="0.8"/><path d="M13.5 13.5 L20 20" stroke="#b8782a" stroke-width="3.2" stroke-linecap="round"/></svg><svg style="position:absolute;left:909px;top:208px;" width="21" height="20" viewBox="0 0 21 20"><rect x="7" y="1" width="13" height="18" fill="#f4f6fa" stroke="#7a8aa8"/><path d="M13.5 1 V19 M7 7 H20 M7 13 H20" stroke="#7a8aa8"/><rect x="1" y="5" width="9" height="10" fill="#4aa830" stroke="#2a7a18"/><path d="M3 8 L8 12 M8 8 L3 12" stroke="#fff" stroke-width="1.3"/></svg><svg style="position:absolute;left:941px;top:207px;" width="22" height="22" viewBox="0 0 22 22"><defs><radialGradient id="gx" cx="0.4" cy="0.35" r="0.7"><stop offset="0" stop-color="#ff8a7a"/><stop offset="1" stop-color="#c81818"/></radialGradient></defs><circle cx="11" cy="11" r="10" fill="url(#gx)" stroke="#a01010"/><path d="M7 7 L15 15 M15 7 L7 15" stroke="#fff" stroke-width="2.6"/></svg><svg style="position:absolute;left:989px;top:207px;" width="22" height="22" viewBox="0 0 22 22"><polygon points="20.50,11.00 20.32,12.85 17.32,13.62 16.69,14.80 17.72,17.72 16.28,18.90 13.62,17.32 12.33,17.71 11.00,20.50 9.15,20.32 8.38,17.32 7.20,16.69 4.28,17.72 3.10,16.28 4.68,13.62 4.29,12.33 1.50,11.00 1.68,9.15 4.68,8.38 5.31,7.20 4.28,4.28 5.72,3.10 8.38,4.68 9.67,4.29 11.00,1.50 12.85,1.68 13.62,4.68 14.80,5.31 17.72,4.28 18.90,5.72 17.32,8.38 17.71,9.67" fill="#d8dce4" stroke="#7c8494" stroke-width="1"/><circle cx="11" cy="11" r="3.04" fill="#d3d9e6" stroke="#7c8494" stroke-width="1.2"/></svg><div style="position:absolute;left:17px;top:239px;width:653px;height:50px;background:#fff;box-sizing:border-box;border:1px solid #aab3c4;"></div><div style="position:absolute;left:18px;top:240px;width:651px;height:25px;background:#f6f7fb;box-sizing:border-box;"></div><div style="position:absolute;left:18px;top:265px;width:651px;height:1px;background:#d3d7e2;box-sizing:border-box;"></div><div style="position:absolute;left:62px;top:240px;width:1px;height:48px;background:#d3d7e2;box-sizing:border-box;"></div><div style="position:absolute;left:107px;top:240px;width:1px;height:48px;background:#d3d7e2;box-sizing:border-box;"></div><div style="position:absolute;left:152px;top:240px;width:1px;height:48px;background:#d3d7e2;box-sizing:border-box;"></div><div style="position:absolute;left:197px;top:240px;width:1px;height:48px;background:#d3d7e2;box-sizing:border-box;"></div><div style="position:absolute;left:242px;top:240px;width:1px;height:48px;background:#d3d7e2;box-sizing:border-box;"></div><div style="position:absolute;left:287px;top:240px;width:1px;height:48px;background:#d3d7e2;box-sizing:border-box;"></div><div style="position:absolute;left:332px;top:240px;width:1px;height:48px;background:#d3d7e2;box-sizing:border-box;"></div><div style="position:absolute;left:377px;top:240px;width:1px;height:48px;background:#d3d7e2;box-sizing:border-box;"></div><div style="position:absolute;left:422px;top:240px;width:1px;height:48px;background:#d3d7e2;box-sizing:border-box;"></div><div style="position:absolute;left:467px;top:240px;width:1px;height:48px;background:#d3d7e2;box-sizing:border-box;"></div><div style="position:absolute;left:512px;top:240px;width:1px;height:48px;background:#d3d7e2;box-sizing:border-box;"></div><div style="position:absolute;left:557px;top:240px;width:1px;height:48px;background:#d3d7e2;box-sizing:border-box;"></div><div style="position:absolute;left:602px;top:240px;width:1px;height:48px;background:#d3d7e2;box-sizing:border-box;"></div><div style="position:absolute;left:648px;top:240px;width:1px;height:48px;background:#d3d7e2;box-sizing:border-box;"></div><div style="position:absolute;top:244.4px;font-size:14.3px;line-height:17.2px;color:#222a36;white-space:nowrap;left:17.5px;width:45px;text-align:center;">Sy...</div><div style="position:absolute;top:244.4px;font-size:14.3px;line-height:17.2px;color:#222a36;white-space:nowrap;left:62.5px;width:45px;text-align:center;">Ex...</div><div style="position:absolute;top:244.4px;font-size:14.3px;line-height:17.2px;color:#222a36;white-space:nowrap;left:107.5px;width:45px;text-align:center;">DTE</div><div style="position:absolute;top:244.4px;font-size:14.3px;line-height:17.2px;color:#222a36;white-space:nowrap;left:152.5px;width:45px;text-align:center;">Open</div><div style="position:absolute;top:244.4px;font-size:14.3px;line-height:17.2px;color:#222a36;white-space:nowrap;left:197.5px;width:45px;text-align:center;">High</div><div style="position:absolute;top:244.4px;font-size:14.3px;line-height:17.2px;color:#222a36;white-space:nowrap;left:242.5px;width:45px;text-align:center;">Low</div><div style="position:absolute;top:244.4px;font-size:14.3px;line-height:17.2px;color:#222a36;white-space:nowrap;left:287.5px;width:45px;text-align:center;">Last</div><div style="position:absolute;top:244.4px;font-size:14.3px;line-height:17.2px;color:#222a36;white-space:nowrap;left:332.5px;width:45px;text-align:center;">Chg</div><div style="position:absolute;top:244.4px;font-size:14.3px;line-height:17.2px;color:#222a36;white-space:nowrap;left:377.5px;width:45px;text-align:center;">Ch...</div><div style="position:absolute;top:244.4px;font-size:14.3px;line-height:17.2px;color:#222a36;white-space:nowrap;left:422.5px;width:45px;text-align:center;">IV</div><div style="position:absolute;top:244.4px;font-size:14.3px;line-height:17.2px;color:#222a36;white-space:nowrap;left:467.5px;width:45px;text-align:center;">IV ...</div><div style="position:absolute;top:244.4px;font-size:14.3px;line-height:17.2px;color:#222a36;white-space:nowrap;left:512.5px;width:45px;text-align:center;">SD</div><div style="position:absolute;top:244.4px;font-size:14.3px;line-height:17.2px;color:#222a36;white-space:nowrap;left:557.5px;width:45px;text-align:center;">Mo...</div><div style="position:absolute;top:244.4px;font-size:14.3px;line-height:17.2px;color:#222a36;white-space:nowrap;left:602.5px;width:46px;text-align:center;">Pos...</div><div style="position:absolute;top:268.9px;font-size:14.3px;line-height:17.2px;color:#111;white-space:nowrap;left:20px;">/ES...</div><div style="position:absolute;top:268.9px;font-size:14.3px;line-height:17.2px;color:#111;white-space:nowrap;left:65px;">jun....</div><div style="position:absolute;top:268.9px;font-size:14.3px;line-height:17.2px;color:#111;white-space:nowrap;right:1756.5px;">11</div><div style="position:absolute;top:268.9px;font-size:14.3px;line-height:17.2px;color:#111;white-space:nowrap;left:155px;">601...</div><div style="position:absolute;top:268.9px;font-size:14.3px;line-height:17.2px;color:#111;white-space:nowrap;left:200px;">601...</div><div style="position:absolute;top:268.9px;font-size:14.3px;line-height:17.2px;color:#111;white-space:nowrap;left:245px;">599...</div><div style="position:absolute;top:268.9px;font-size:14.3px;line-height:17.2px;color:#16921a;white-space:nowrap;left:290px;">601...</div><div style="position:absolute;top:268.9px;font-size:14.3px;line-height:17.2px;color:#16921a;white-space:nowrap;left:335px;">+7....</div><div style="position:absolute;top:268.9px;font-size:14.3px;line-height:17.2px;color:#111;white-space:nowrap;left:380px;">+0....</div><div style="position:absolute;top:268.9px;font-size:14.3px;line-height:17.2px;color:#111;white-space:nowrap;right:1441.5px;">14.37</div><div style="position:absolute;top:268.9px;font-size:14.3px;line-height:17.2px;color:#111;white-space:nowrap;right:1396.5px;">+7%</div><div style="position:absolute;top:268.9px;font-size:14.3px;line-height:17.2px;color:#111;white-space:nowrap;right:1351.5px;">0.14</div><div style="position:absolute;left:649px;top:266px;width:20px;height:22px;background:#d1d7e6;box-sizing:border-box;"></div><svg style="position:absolute;left:653px;top:267px;" width="12" height="20" viewBox="0 0 12 20"><path d="M1 6.5 H10 L5.5 1.5 Z M1 13.5 H10 L5.5 18.5 Z" fill="#6a7890"/></svg><div style="position:absolute;left:674px;top:239px;width:341px;height:50px;background:#fff;box-sizing:border-box;border:1px solid #aab3c4;"></div><div style="position:absolute;left:675px;top:240px;width:339px;height:25px;background:#f6f7fb;box-sizing:border-box;"></div><div style="position:absolute;left:675px;top:265px;width:339px;height:1px;background:#d3d7e2;box-sizing:border-box;"></div><div style="position:absolute;left:741px;top:240px;width:1px;height:48px;background:#d3d7e2;box-sizing:border-box;"></div><div style="position:absolute;left:808px;top:240px;width:1px;height:48px;background:#d3d7e2;box-sizing:border-box;"></div><div style="position:absolute;left:875px;top:240px;width:1px;height:48px;background:#d3d7e2;box-sizing:border-box;"></div><div style="position:absolute;left:942px;top:240px;width:1px;height:48px;background:#d3d7e2;box-sizing:border-box;"></div><div style="position:absolute;top:244.4px;font-size:14.3px;line-height:17.2px;color:#222a36;white-space:nowrap;left:674.5px;width:67px;text-align:center;">DIT</div><div style="position:absolute;top:244.4px;font-size:14.3px;line-height:17.2px;color:#222a36;white-space:nowrap;left:741.5px;width:67px;text-align:center;">SD</div><div style="position:absolute;top:244.4px;font-size:14.3px;line-height:17.2px;color:#222a36;white-space:nowrap;left:808.5px;width:67px;text-align:center;">IVChg%</div><div style="position:absolute;top:244.4px;font-size:14.3px;line-height:17.2px;color:#222a36;white-space:nowrap;left:875.5px;width:67px;text-align:center;">CurrM...</div><div style="position:absolute;top:244.4px;font-size:14.3px;line-height:17.2px;color:#222a36;white-space:nowrap;left:942.5px;width:72px;text-align:center;">PnL%</div><div style="position:absolute;top:268.9px;font-size:14.3px;line-height:17.2px;color:#111;white-space:nowrap;right:1167.5px;">32</div><div style="position:absolute;top:268.9px;font-size:14.3px;line-height:17.2px;color:#111;white-space:nowrap;right:1100.5px;">0.95</div><div style="position:absolute;top:268.9px;font-size:14.3px;line-height:17.2px;color:#111;white-space:nowrap;right:1033.5px;">-28.97%</div><div style="position:absolute;top:268.9px;font-size:14.3px;line-height:17.2px;color:#111;white-space:nowrap;left:878px;">34,110...</div><div style="position:absolute;top:268.9px;font-size:14.3px;line-height:17.2px;color:#111;white-space:nowrap;right:894.5px;">0.88%</div><svg style="position:absolute;left:506px;top:295px;" width="16" height="3" viewBox="0 0 16 3"><rect x="0" y="0" width="1" height="1" fill="#9aa2b4"/><rect x="1" y="2" width="1" height="1" fill="#9aa2b4"/><rect x="2" y="0" width="1" height="1" fill="#9aa2b4"/><rect x="3" y="2" width="1" height="1" fill="#9aa2b4"/><rect x="4" y="0" width="1" height="1" fill="#9aa2b4"/><rect x="5" y="2" width="1" height="1" fill="#9aa2b4"/><rect x="6" y="0" width="1" height="1" fill="#9aa2b4"/><rect x="7" y="2" width="1" height="1" fill="#9aa2b4"/><rect x="8" y="0" width="1" height="1" fill="#9aa2b4"/><rect x="9" y="2" width="1" height="1" fill="#9aa2b4"/><rect x="10" y="0" width="1" height="1" fill="#9aa2b4"/><rect x="11" y="2" width="1" height="1" fill="#9aa2b4"/><rect x="12" y="0" width="1" height="1" fill="#9aa2b4"/><rect x="13" y="2" width="1" height="1" fill="#9aa2b4"/><rect x="14" y="0" width="1" height="1" fill="#9aa2b4"/><rect x="15" y="2" width="1" height="1" fill="#9aa2b4"/></svg><svg style="position:absolute;left:506px;top:439px;" width="16" height="3" viewBox="0 0 16 3"><rect x="0" y="0" width="1" height="1" fill="#9aa2b4"/><rect x="1" y="2" width="1" height="1" fill="#9aa2b4"/><rect x="2" y="0" width="1" height="1" fill="#9aa2b4"/><rect x="3" y="2" width="1" height="1" fill="#9aa2b4"/><rect x="4" y="0" width="1" height="1" fill="#9aa2b4"/><rect x="5" y="2" width="1" height="1" fill="#9aa2b4"/><rect x="6" y="0" width="1" height="1" fill="#9aa2b4"/><rect x="7" y="2" width="1" height="1" fill="#9aa2b4"/><rect x="8" y="0" width="1" height="1" fill="#9aa2b4"/><rect x="9" y="2" width="1" height="1" fill="#9aa2b4"/><rect x="10" y="0" width="1" height="1" fill="#9aa2b4"/><rect x="11" y="2" width="1" height="1" fill="#9aa2b4"/><rect x="12" y="0" width="1" height="1" fill="#9aa2b4"/><rect x="13" y="2" width="1" height="1" fill="#9aa2b4"/><rect x="14" y="0" width="1" height="1" fill="#9aa2b4"/><rect x="15" y="2" width="1" height="1" fill="#9aa2b4"/></svg><svg style="position:absolute;left:506px;top:868px;" width="16" height="3" viewBox="0 0 16 3"><rect x="0" y="0" width="1" height="1" fill="#9aa2b4"/><rect x="1" y="2" width="1" height="1" fill="#9aa2b4"/><rect x="2" y="0" width="1" height="1" fill="#9aa2b4"/><rect x="3" y="2" width="1" height="1" fill="#9aa2b4"/><rect x="4" y="0" width="1" height="1" fill="#9aa2b4"/><rect x="5" y="2" width="1" height="1" fill="#9aa2b4"/><rect x="6" y="0" width="1" height="1" fill="#9aa2b4"/><rect x="7" y="2" width="1" height="1" fill="#9aa2b4"/><rect x="8" y="0" width="1" height="1" fill="#9aa2b4"/><rect x="9" y="2" width="1" height="1" fill="#9aa2b4"/><rect x="10" y="0" width="1" height="1" fill="#9aa2b4"/><rect x="11" y="2" width="1" height="1" fill="#9aa2b4"/><rect x="12" y="0" width="1" height="1" fill="#9aa2b4"/><rect x="13" y="2" width="1" height="1" fill="#9aa2b4"/><rect x="14" y="0" width="1" height="1" fill="#9aa2b4"/><rect x="15" y="2" width="1" height="1" fill="#9aa2b4"/></svg><div style="position:absolute;left:18px;top:304px;width:75px;height:129px;background:#fff;box-sizing:border-box;border:1px solid #aab3c4;"></div><div style="position:absolute;left:19px;top:305px;width:73px;height:26px;background:#d6dbe8;box-sizing:border-box;"></div><div style="position:absolute;left:19px;top:330px;width:73px;height:1px;background:#aab3c4;box-sizing:border-box;"></div><svg style="position:absolute;left:34px;top:310px;" width="40" height="15" viewBox="0 0 40 15"><path d="M1.5 7.5 L12 1.5 V13.5 Z" fill="#cde0fa" stroke="#4f86d8" stroke-width="1.4" stroke-linejoin="round"/><path d="M38 7.5 L27.5 1.5 V13.5 Z" fill="#cde0fa" stroke="#4f86d8" stroke-width="1.4" stroke-linejoin="round"/></svg><div style="position:absolute;left:19px;top:331px;width:73px;height:25px;background:#f6f7fb;box-sizing:border-box;"></div><div style="position:absolute;top:335.4px;font-size:14.3px;line-height:17.2px;color:#222a36;white-space:nowrap;left:20.5px;width:70px;text-align:center;">CALLS</div><div style="position:absolute;left:19px;top:356px;width:73px;height:1px;background:#d3d7e2;box-sizing:border-box;"></div><div style="position:absolute;top:359.9px;font-size:14.3px;line-height:17.2px;color:#111;white-space:nowrap;left:20.5px;width:70px;text-align:center;">6125</div><div style="position:absolute;left:19px;top:379px;width:73px;height:1px;background:#d3d7e2;box-sizing:border-box;"></div><div style="position:absolute;top:382.9px;font-size:14.3px;line-height:17.2px;color:#111;white-space:nowrap;left:20.5px;width:70px;text-align:center;">6100</div><div style="position:absolute;left:19px;top:402px;width:73px;height:1px;background:#d3d7e2;box-sizing:border-box;"></div><div style="position:absolute;top:405.9px;font-size:14.3px;line-height:17.2px;color:#111;white-space:nowrap;left:20.5px;width:70px;text-align:center;">6075</div><div style="position:absolute;left:19px;top:425px;width:73px;height:1px;background:#d3d7e2;box-sizing:border-box;"></div><div style="position:absolute;left:97px;top:304px;width:458px;height:129px;background:#fff;box-sizing:border-box;border:1px solid #aab3c4;"></div><div style="position:absolute;left:98px;top:305px;width:456px;height:25px;background:#d6dbe8;box-sizing:border-box;"></div><div style="position:absolute;left:98px;top:330px;width:456px;height:1px;background:#aab3c4;box-sizing:border-box;"></div><div style="position:absolute;left:98px;top:331px;width:456px;height:25px;background:#f6f7fb;box-sizing:border-box;"></div><div style="position:absolute;top:335.4px;font-size:14.3px;line-height:17.2px;color:#222a36;white-space:nowrap;left:85.5px;width:100px;text-align:center;">Mid</div><div style="position:absolute;top:335.4px;font-size:14.3px;line-height:17.2px;color:#222a36;white-space:nowrap;left:161.5px;width:100px;text-align:center;">Delta</div><div style="position:absolute;top:335.4px;font-size:14.3px;line-height:17.2px;color:#222a36;white-space:nowrap;left:237.5px;width:100px;text-align:center;">Theta</div><div style="position:absolute;top:335.4px;font-size:14.3px;line-height:17.2px;color:#222a36;white-space:nowrap;left:313.5px;width:100px;text-align:center;">OrigPrice</div><div style="position:absolute;top:335.4px;font-size:14.3px;line-height:17.2px;color:#222a36;white-space:nowrap;left:389.5px;width:100px;text-align:center;">Model</div><div style="position:absolute;top:335.4px;font-size:14.3px;line-height:17.2px;color:#222a36;white-space:nowrap;left:466.0px;width:100px;text-align:center;">Pos</div><div style="position:absolute;left:98px;top:357px;width:456px;height:22px;background:#a9c1df;box-sizing:border-box;"></div><div style="position:absolute;left:98px;top:356px;width:456px;height:1px;background:#d3d7e2;box-sizing:border-box;"></div><div style="position:absolute;top:359.9px;font-size:14.3px;line-height:17.2px;color:#16921a;white-space:nowrap;right:1736.5px;">15.75</div><div style="position:absolute;top:359.9px;font-size:14.3px;line-height:17.2px;color:#111;white-space:nowrap;right:1660.5px;">21.69</div><div style="position:absolute;top:359.9px;font-size:14.3px;line-height:17.2px;color:#111;white-space:nowrap;right:1584.5px;">-1.87</div><div style="position:absolute;left:98px;top:380px;width:456px;height:22px;background:#a9c1df;box-sizing:border-box;"></div><div style="position:absolute;left:98px;top:379px;width:456px;height:1px;background:#cfd8e8;box-sizing:border-box;"></div><div style="position:absolute;top:382.9px;font-size:14.3px;line-height:17.2px;color:#16921a;white-space:nowrap;right:1736.5px;">22.25</div><div style="position:absolute;top:382.9px;font-size:14.3px;line-height:17.2px;color:#111;white-space:nowrap;right:1660.5px;">27.97</div><div style="position:absolute;top:382.9px;font-size:14.3px;line-height:17.2px;color:#111;white-space:nowrap;right:1584.5px;">-2.19</div><div style="position:absolute;left:98px;top:403px;width:456px;height:22px;background:#a9c1df;box-sizing:border-box;"></div><div style="position:absolute;left:98px;top:402px;width:456px;height:1px;background:#cfd8e8;box-sizing:border-box;"></div><div style="position:absolute;top:405.9px;font-size:14.3px;line-height:17.2px;color:#16921a;white-space:nowrap;right:1736.5px;">30.50</div><div style="position:absolute;top:405.9px;font-size:14.3px;line-height:17.2px;color:#111;white-space:nowrap;right:1660.5px;">34.89</div><div style="position:absolute;top:405.9px;font-size:14.3px;line-height:17.2px;color:#111;white-space:nowrap;right:1584.5px;">-2.47</div><div style="position:absolute;left:98px;top:426px;width:456px;height:6px;background:#a9c1df;box-sizing:border-box;"></div><div style="position:absolute;left:98px;top:425px;width:456px;height:1px;background:#cfd8e8;box-sizing:border-box;"></div><div style="position:absolute;left:173px;top:331px;width:1px;height:101px;background:#d3d7e2;box-sizing:border-box;"></div><div style="position:absolute;left:249px;top:331px;width:1px;height:101px;background:#d3d7e2;box-sizing:border-box;"></div><div style="position:absolute;left:325px;top:331px;width:1px;height:101px;background:#d3d7e2;box-sizing:border-box;"></div><div style="position:absolute;left:401px;top:331px;width:1px;height:101px;background:#d3d7e2;box-sizing:border-box;"></div><div style="position:absolute;left:477px;top:331px;width:1px;height:101px;background:#d3d7e2;box-sizing:border-box;"></div><div style="position:absolute;top:309.7px;font-size:15.5px;line-height:18.6px;color:#111;white-space:nowrap;font-weight:bold;left:144.0px;width:300px;text-align:center;letter-spacing:0.5px">jun. 25 (11)&nbsp; ES.M25</div><div style="position:absolute;top:309.7px;font-size:15.5px;line-height:18.6px;color:#111;white-space:nowrap;font-weight:bold;right:1378px;letter-spacing:1.4px">14.01%</div><div style="position:absolute;left:559px;top:304px;width:458px;height:129px;background:#fff;box-sizing:border-box;border:1px solid #aab3c4;"></div><div style="position:absolute;left:560px;top:305px;width:456px;height:25px;background:#d6dbe8;box-sizing:border-box;"></div><div style="position:absolute;left:560px;top:330px;width:456px;height:1px;background:#aab3c4;box-sizing:border-box;"></div><div style="position:absolute;left:560px;top:331px;width:456px;height:25px;background:#f6f7fb;box-sizing:border-box;"></div><div style="position:absolute;top:335.4px;font-size:14.3px;line-height:17.2px;color:#222a36;white-space:nowrap;left:545.5px;width:100px;text-align:center;">Mid</div><div style="position:absolute;top:335.4px;font-size:14.3px;line-height:17.2px;color:#222a36;white-space:nowrap;left:617.5px;width:100px;text-align:center;">Delta</div><div style="position:absolute;top:335.4px;font-size:14.3px;line-height:17.2px;color:#222a36;white-space:nowrap;left:689.5px;width:100px;text-align:center;">Theta</div><div style="position:absolute;top:335.4px;font-size:14.3px;line-height:17.2px;color:#222a36;white-space:nowrap;left:761.5px;width:100px;text-align:center;">OrigPrice</div><div style="position:absolute;top:335.4px;font-size:14.3px;line-height:17.2px;color:#222a36;white-space:nowrap;left:833.5px;width:100px;text-align:center;">Model</div><div style="position:absolute;top:335.4px;font-size:14.3px;line-height:17.2px;color:#222a36;white-space:nowrap;left:907.5px;width:100px;text-align:center;">Pos</div><div style="position:absolute;left:560px;top:357px;width:435px;height:22px;background:#a9c1df;box-sizing:border-box;"></div><div style="position:absolute;left:560px;top:356px;width:435px;height:1px;background:#d3d7e2;box-sizing:border-box;"></div><div style="position:absolute;top:359.9px;font-size:14.3px;line-height:17.2px;color:#111;white-space:nowrap;right:1278.5px;">34.00</div><div style="position:absolute;top:359.9px;font-size:14.3px;line-height:17.2px;color:#111;white-space:nowrap;right:1206.5px;">29.61</div><div style="position:absolute;top:359.9px;font-size:14.3px;line-height:17.2px;color:#111;white-space:nowrap;right:1134.5px;">-3.12</div><div style="position:absolute;left:560px;top:380px;width:435px;height:22px;background:#a9c1df;box-sizing:border-box;"></div><div style="position:absolute;left:560px;top:379px;width:435px;height:1px;background:#cfd8e8;box-sizing:border-box;"></div><div style="position:absolute;top:382.9px;font-size:14.3px;line-height:17.2px;color:#16921a;white-space:nowrap;right:1278.5px;">44.75</div><div style="position:absolute;top:382.9px;font-size:14.3px;line-height:17.2px;color:#111;white-space:nowrap;right:1206.5px;">35.07</div><div style="position:absolute;top:382.9px;font-size:14.3px;line-height:17.2px;color:#111;white-space:nowrap;right:1134.5px;">-3.51</div><div style="position:absolute;left:560px;top:403px;width:435px;height:22px;background:#a9c1df;box-sizing:border-box;"></div><div style="position:absolute;left:560px;top:402px;width:435px;height:1px;background:#cfd8e8;box-sizing:border-box;"></div><div style="position:absolute;top:405.9px;font-size:14.3px;line-height:17.2px;color:#f41414;white-space:nowrap;right:1278.5px;">57.00</div><div style="position:absolute;top:405.9px;font-size:14.3px;line-height:17.2px;color:#111;white-space:nowrap;right:1206.5px;">40.38</div><div style="position:absolute;top:405.9px;font-size:14.3px;line-height:17.2px;color:#111;white-space:nowrap;right:1134.5px;">-3.83</div><div style="position:absolute;left:560px;top:426px;width:435px;height:6px;background:#a9c1df;box-sizing:border-box;"></div><div style="position:absolute;left:560px;top:425px;width:435px;height:1px;background:#cfd8e8;box-sizing:border-box;"></div><div style="position:absolute;left:631px;top:331px;width:1px;height:101px;background:#d3d7e2;box-sizing:border-box;"></div><div style="position:absolute;left:703px;top:331px;width:1px;height:101px;background:#d3d7e2;box-sizing:border-box;"></div><div style="position:absolute;left:775px;top:331px;width:1px;height:101px;background:#d3d7e2;box-sizing:border-box;"></div><div style="position:absolute;left:847px;top:331px;width:1px;height:101px;background:#d3d7e2;box-sizing:border-box;"></div><div style="position:absolute;left:919px;top:331px;width:1px;height:101px;background:#d3d7e2;box-sizing:border-box;"></div><div style="position:absolute;left:995px;top:331px;width:1px;height:25px;background:#d3d7e2;box-sizing:border-box;"></div><div style="position:absolute;left:995px;top:357px;width:21px;height:75px;background:#d1d7e6;box-sizing:border-box;"></div><div style="position:absolute;left:995px;top:356px;width:21px;height:1px;background:#d3d7e2;box-sizing:border-box;"></div><div style="position:absolute;top:309.7px;font-size:15.5px;line-height:18.6px;color:#111;white-space:nowrap;font-weight:bold;left:605.7px;width:300px;text-align:center;letter-spacing:0.5px">jun. 25 (11)&nbsp; EW3.M25</div><div style="position:absolute;top:309.7px;font-size:15.5px;line-height:18.6px;color:#111;white-space:nowrap;font-weight:bold;right:917.5px;letter-spacing:1.4px">16.36%</div><svg style="position:absolute;left:998px;top:360px;" width="16" height="66" viewBox="0 0 16 66"><path d="M3 9.5 H12 L7.5 4.5 Z" fill="#5e6c86"/><rect x="2" y="22" width="12" height="20" fill="#8e97a8"/><path d="M3 58 H12 L7.5 63 Z" fill="#5e6c86"/></svg><div style="position:absolute;left:18px;top:448px;width:75px;height:414px;background:#fff;box-sizing:border-box;border:1px solid #aab3c4;"></div><div style="position:absolute;left:19px;top:449px;width:73px;height:25px;background:#f6f7fb;box-sizing:border-box;"></div><div style="position:absolute;top:453.4px;font-size:14.3px;line-height:17.2px;color:#222a36;white-space:nowrap;left:20.5px;width:70px;text-align:center;">PUTS</div><div style="position:absolute;left:19px;top:474px;width:73px;height:1px;background:#d3d7e2;box-sizing:border-box;"></div><div style="position:absolute;top:477.9px;font-size:14.3px;line-height:17.2px;color:#111;white-space:nowrap;left:20.5px;width:70px;text-align:center;">5675</div><div style="position:absolute;left:19px;top:497px;width:73px;height:1px;background:#d3d7e2;box-sizing:border-box;"></div><div style="position:absolute;top:500.9px;font-size:14.3px;line-height:17.2px;color:#111;white-space:nowrap;left:20.5px;width:70px;text-align:center;">5650</div><div style="position:absolute;left:19px;top:520px;width:73px;height:1px;background:#d3d7e2;box-sizing:border-box;"></div><div style="position:absolute;top:523.9px;font-size:14.3px;line-height:17.2px;color:#111;white-space:nowrap;left:20.5px;width:70px;text-align:center;">5625</div><div style="position:absolute;left:19px;top:543px;width:73px;height:1px;background:#d3d7e2;box-sizing:border-box;"></div><div style="position:absolute;top:546.9px;font-size:14.3px;line-height:17.2px;color:#111;white-space:nowrap;left:20.5px;width:70px;text-align:center;">5600</div><div style="position:absolute;left:19px;top:566px;width:73px;height:1px;background:#d3d7e2;box-sizing:border-box;"></div><div style="position:absolute;top:569.9px;font-size:14.3px;line-height:17.2px;color:#111;white-space:nowrap;left:20.5px;width:70px;text-align:center;">5575</div><div style="position:absolute;left:19px;top:589px;width:73px;height:1px;background:#d3d7e2;box-sizing:border-box;"></div><div style="position:absolute;top:592.9px;font-size:14.3px;line-height:17.2px;color:#111;white-space:nowrap;left:20.5px;width:70px;text-align:center;">5550</div><div style="position:absolute;left:19px;top:612px;width:73px;height:1px;background:#d3d7e2;box-sizing:border-box;"></div><div style="position:absolute;top:615.9px;font-size:14.3px;line-height:17.2px;color:#111;white-space:nowrap;left:20.5px;width:70px;text-align:center;">5525</div><div style="position:absolute;left:19px;top:635px;width:73px;height:1px;background:#d3d7e2;box-sizing:border-box;"></div><div style="position:absolute;top:638.9px;font-size:14.3px;line-height:17.2px;color:#111;white-space:nowrap;left:20.5px;width:70px;text-align:center;">5500</div><div style="position:absolute;left:19px;top:658px;width:73px;height:1px;background:#d3d7e2;box-sizing:border-box;"></div><div style="position:absolute;top:661.9px;font-size:14.3px;line-height:17.2px;color:#111;white-space:nowrap;left:20.5px;width:70px;text-align:center;">5475</div><div style="position:absolute;left:19px;top:681px;width:73px;height:1px;background:#d3d7e2;box-sizing:border-box;"></div><div style="position:absolute;top:684.9px;font-size:14.3px;line-height:17.2px;color:#111;white-space:nowrap;left:20.5px;width:70px;text-align:center;">5450</div><div style="position:absolute;left:19px;top:704px;width:73px;height:1px;background:#d3d7e2;box-sizing:border-box;"></div><div style="position:absolute;top:707.9px;font-size:14.3px;line-height:17.2px;color:#111;white-space:nowrap;left:20.5px;width:70px;text-align:center;">5425</div><div style="position:absolute;left:19px;top:727px;width:73px;height:1px;background:#d3d7e2;box-sizing:border-box;"></div><div style="position:absolute;top:730.9px;font-size:14.3px;line-height:17.2px;color:#111;white-space:nowrap;left:20.5px;width:70px;text-align:center;">5400</div><div style="position:absolute;left:19px;top:750px;width:73px;height:1px;background:#d3d7e2;box-sizing:border-box;"></div><div style="position:absolute;top:753.9px;font-size:14.3px;line-height:17.2px;color:#111;white-space:nowrap;left:20.5px;width:70px;text-align:center;">5375</div><div style="position:absolute;left:19px;top:773px;width:73px;height:1px;background:#d3d7e2;box-sizing:border-box;"></div><div style="position:absolute;top:776.9px;font-size:14.3px;line-height:17.2px;color:#111;white-space:nowrap;left:20.5px;width:70px;text-align:center;">5350</div><div style="position:absolute;left:19px;top:796px;width:73px;height:1px;background:#d3d7e2;box-sizing:border-box;"></div><div style="position:absolute;top:799.9px;font-size:14.3px;line-height:17.2px;color:#111;white-space:nowrap;left:20.5px;width:70px;text-align:center;">5325</div><div style="position:absolute;left:19px;top:819px;width:73px;height:1px;background:#d3d7e2;box-sizing:border-box;"></div><div style="position:absolute;top:822.9px;font-size:14.3px;line-height:17.2px;color:#111;white-space:nowrap;left:20.5px;width:70px;text-align:center;">5300</div><div style="position:absolute;left:19px;top:842px;width:73px;height:1px;background:#d3d7e2;box-sizing:border-box;"></div><div style="position:absolute;top:845.9px;font-size:14.3px;line-height:17.2px;color:#111;white-space:nowrap;left:20.5px;width:70px;text-align:center;">5275</div><div style="position:absolute;left:97px;top:448px;width:458px;height:414px;background:#fff;box-sizing:border-box;border:1px solid #aab3c4;"></div><div style="position:absolute;left:98px;top:449px;width:456px;height:25px;background:#f6f7fb;box-sizing:border-box;"></div><div style="position:absolute;top:453.4px;font-size:14.3px;line-height:17.2px;color:#222a36;white-space:nowrap;left:85.5px;width:100px;text-align:center;">Mid</div><div style="position:absolute;top:453.4px;font-size:14.3px;line-height:17.2px;color:#222a36;white-space:nowrap;left:161.5px;width:100px;text-align:center;">Delta</div><div style="position:absolute;top:453.4px;font-size:14.3px;line-height:17.2px;color:#222a36;white-space:nowrap;left:237.5px;width:100px;text-align:center;">Theta</div><div style="position:absolute;top:453.4px;font-size:14.3px;line-height:17.2px;color:#222a36;white-space:nowrap;left:313.5px;width:100px;text-align:center;">OrigPrice</div><div style="position:absolute;top:453.4px;font-size:14.3px;line-height:17.2px;color:#222a36;white-space:nowrap;left:389.5px;width:100px;text-align:center;">Model</div><div style="position:absolute;top:453.4px;font-size:14.3px;line-height:17.2px;color:#222a36;white-space:nowrap;left:466.0px;width:100px;text-align:center;">Pos</div><div style="position:absolute;left:98px;top:474px;width:456px;height:1px;background:#d3d7e2;box-sizing:border-box;"></div><div style="position:absolute;top:477.9px;font-size:14.3px;line-height:17.2px;color:#f41414;white-space:nowrap;right:1736.5px;">4.65</div><div style="position:absolute;top:477.9px;font-size:14.3px;line-height:17.2px;color:#111;white-space:nowrap;right:1660.5px;">-5.00</div><div style="position:absolute;top:477.9px;font-size:14.3px;line-height:17.2px;color:#111;white-space:nowrap;right:1584.5px;">-0.99</div><div style="position:absolute;top:477.9px;font-size:14.3px;line-height:17.2px;color:#111;white-space:nowrap;right:1508.5px;">6.68</div><div style="position:absolute;top:477.9px;font-size:14.3px;line-height:17.2px;color:#111;white-space:nowrap;right:1355.5px;">-2</div><div style="position:absolute;left:98px;top:497px;width:456px;height:1px;background:#d3d7e2;box-sizing:border-box;"></div><div style="position:absolute;top:500.9px;font-size:14.3px;line-height:17.2px;color:#111;white-space:nowrap;right:1736.5px;">4.10</div><div style="position:absolute;top:500.9px;font-size:14.3px;line-height:17.2px;color:#111;white-space:nowrap;right:1660.5px;">-4.36</div><div style="position:absolute;top:500.9px;font-size:14.3px;line-height:17.2px;color:#111;white-space:nowrap;right:1584.5px;">-0.92</div><div style="position:absolute;left:98px;top:520px;width:456px;height:1px;background:#d3d7e2;box-sizing:border-box;"></div><div style="position:absolute;top:523.9px;font-size:14.3px;line-height:17.2px;color:#111;white-space:nowrap;right:1736.5px;">3.625</div><div style="position:absolute;top:523.9px;font-size:14.3px;line-height:17.2px;color:#111;white-space:nowrap;right:1660.5px;">-3.81</div><div style="position:absolute;top:523.9px;font-size:14.3px;line-height:17.2px;color:#111;white-space:nowrap;right:1584.5px;">-0.85</div><div style="position:absolute;left:98px;top:543px;width:456px;height:1px;background:#d3d7e2;box-sizing:border-box;"></div><div style="position:absolute;top:546.9px;font-size:14.3px;line-height:17.2px;color:#111;white-space:nowrap;right:1736.5px;">3.25</div><div style="position:absolute;top:546.9px;font-size:14.3px;line-height:17.2px;color:#111;white-space:nowrap;right:1660.5px;">-3.37</div><div style="position:absolute;top:546.9px;font-size:14.3px;line-height:17.2px;color:#111;white-space:nowrap;right:1584.5px;">-0.80</div><div style="position:absolute;left:98px;top:566px;width:456px;height:1px;background:#d3d7e2;box-sizing:border-box;"></div><div style="position:absolute;top:569.9px;font-size:14.3px;line-height:17.2px;color:#111;white-space:nowrap;right:1736.5px;">2.95</div><div style="position:absolute;top:569.9px;font-size:14.3px;line-height:17.2px;color:#111;white-space:nowrap;right:1660.5px;">-3.01</div><div style="position:absolute;top:569.9px;font-size:14.3px;line-height:17.2px;color:#111;white-space:nowrap;right:1584.5px;">-0.75</div><div style="position:absolute;left:98px;top:589px;width:456px;height:1px;background:#d3d7e2;box-sizing:border-box;"></div><div style="position:absolute;top:592.9px;font-size:14.3px;line-height:17.2px;color:#111;white-space:nowrap;right:1736.5px;">2.70</div><div style="position:absolute;top:592.9px;font-size:14.3px;line-height:17.2px;color:#111;white-space:nowrap;right:1660.5px;">-2.70</div><div style="position:absolute;top:592.9px;font-size:14.3px;line-height:17.2px;color:#111;white-space:nowrap;right:1584.5px;">-0.71</div><div style="position:absolute;left:98px;top:612px;width:456px;height:1px;background:#d3d7e2;box-sizing:border-box;"></div><div style="position:absolute;top:615.9px;font-size:14.3px;line-height:17.2px;color:#f41414;white-space:nowrap;right:1736.5px;">2.50</div><div style="position:absolute;top:615.9px;font-size:14.3px;line-height:17.2px;color:#111;white-space:nowrap;right:1660.5px;">-2.45</div><div style="position:absolute;top:615.9px;font-size:14.3px;line-height:17.2px;color:#111;white-space:nowrap;right:1584.5px;">-0.68</div><div style="position:absolute;left:98px;top:635px;width:456px;height:1px;background:#d3d7e2;box-sizing:border-box;"></div><div style="position:absolute;top:638.9px;font-size:14.3px;line-height:17.2px;color:#f41414;white-space:nowrap;right:1736.5px;">2.30</div><div style="position:absolute;top:638.9px;font-size:14.3px;line-height:17.2px;color:#111;white-space:nowrap;right:1660.5px;">-2.22</div><div style="position:absolute;top:638.9px;font-size:14.3px;line-height:17.2px;color:#111;white-space:nowrap;right:1584.5px;">-0.64</div><div style="position:absolute;left:98px;top:658px;width:456px;height:1px;background:#d3d7e2;box-sizing:border-box;"></div><div style="position:absolute;top:661.9px;font-size:14.3px;line-height:17.2px;color:#f41414;white-space:nowrap;right:1736.5px;">2.15</div><div style="position:absolute;top:661.9px;font-size:14.3px;line-height:17.2px;color:#111;white-space:nowrap;right:1660.5px;">-2.03</div><div style="position:absolute;top:661.9px;font-size:14.3px;line-height:17.2px;color:#111;white-space:nowrap;right:1584.5px;">-0.62</div><div style="position:absolute;left:98px;top:681px;width:456px;height:1px;background:#d3d7e2;box-sizing:border-box;"></div><div style="position:absolute;top:684.9px;font-size:14.3px;line-height:17.2px;color:#f41414;white-space:nowrap;right:1736.5px;">2.00</div><div style="position:absolute;top:684.9px;font-size:14.3px;line-height:17.2px;color:#111;white-space:nowrap;right:1660.5px;">-1.86</div><div style="position:absolute;top:684.9px;font-size:14.3px;line-height:17.2px;color:#111;white-space:nowrap;right:1584.5px;">-0.59</div><div style="position:absolute;left:98px;top:704px;width:456px;height:1px;background:#d3d7e2;box-sizing:border-box;"></div><div style="position:absolute;top:707.9px;font-size:14.3px;line-height:17.2px;color:#f41414;white-space:nowrap;right:1736.5px;">1.85</div><div style="position:absolute;top:707.9px;font-size:14.3px;line-height:17.2px;color:#111;white-space:nowrap;right:1660.5px;">-1.69</div><div style="position:absolute;top:707.9px;font-size:14.3px;line-height:17.2px;color:#111;white-space:nowrap;right:1584.5px;">-0.56</div><div style="position:absolute;left:98px;top:727px;width:456px;height:1px;background:#d3d7e2;box-sizing:border-box;"></div><div style="position:absolute;top:730.9px;font-size:14.3px;line-height:17.2px;color:#f41414;white-space:nowrap;right:1736.5px;">1.75</div><div style="position:absolute;top:730.9px;font-size:14.3px;line-height:17.2px;color:#111;white-space:nowrap;right:1660.5px;">-1.57</div><div style="position:absolute;top:730.9px;font-size:14.3px;line-height:17.2px;color:#111;white-space:nowrap;right:1584.5px;">-0.54</div><div style="position:absolute;left:98px;top:750px;width:456px;height:1px;background:#d3d7e2;box-sizing:border-box;"></div><div style="position:absolute;top:753.9px;font-size:14.3px;line-height:17.2px;color:#16921a;white-space:nowrap;right:1736.5px;">1.875</div><div style="position:absolute;top:753.9px;font-size:14.3px;line-height:17.2px;color:#111;white-space:nowrap;right:1660.5px;">-1.60</div><div style="position:absolute;top:753.9px;font-size:14.3px;line-height:17.2px;color:#111;white-space:nowrap;right:1584.5px;">-0.57</div><div style="position:absolute;left:98px;top:773px;width:456px;height:1px;background:#d3d7e2;box-sizing:border-box;"></div><div style="position:absolute;top:776.9px;font-size:14.3px;line-height:17.2px;color:#16921a;white-space:nowrap;right:1736.5px;">1.50</div><div style="position:absolute;top:776.9px;font-size:14.3px;line-height:17.2px;color:#111;white-space:nowrap;right:1660.5px;">-1.30</div><div style="position:absolute;top:776.9px;font-size:14.3px;line-height:17.2px;color:#111;white-space:nowrap;right:1584.5px;">-0.48</div><div style="position:absolute;top:776.9px;font-size:14.3px;line-height:17.2px;color:#111;white-space:nowrap;right:1508.5px;">61.63</div><div style="position:absolute;top:776.9px;font-size:14.3px;line-height:17.2px;color:#111;white-space:nowrap;right:1355.5px;">+2</div><div style="position:absolute;left:98px;top:796px;width:456px;height:1px;background:#d3d7e2;box-sizing:border-box;"></div><div style="position:absolute;top:799.9px;font-size:14.3px;line-height:17.2px;color:#f41414;white-space:nowrap;right:1736.5px;">1.40</div><div style="position:absolute;top:799.9px;font-size:14.3px;line-height:17.2px;color:#111;white-space:nowrap;right:1660.5px;">-1.20</div><div style="position:absolute;top:799.9px;font-size:14.3px;line-height:17.2px;color:#111;white-space:nowrap;right:1584.5px;">-0.46</div><div style="position:absolute;left:98px;top:819px;width:456px;height:1px;background:#d3d7e2;box-sizing:border-box;"></div><div style="position:absolute;top:822.9px;font-size:14.3px;line-height:17.2px;color:#16921a;white-space:nowrap;right:1736.5px;">1.30</div><div style="position:absolute;top:822.9px;font-size:14.3px;line-height:17.2px;color:#111;white-space:nowrap;right:1660.5px;">-1.10</div><div style="position:absolute;top:822.9px;font-size:14.3px;line-height:17.2px;color:#111;white-space:nowrap;right:1584.5px;">-0.44</div><div style="position:absolute;top:822.9px;font-size:14.3px;line-height:17.2px;color:#111;white-space:nowrap;right:1508.5px;">53.75</div><div style="position:absolute;top:822.9px;font-size:14.3px;line-height:17.2px;color:#111;white-space:nowrap;right:1355.5px;">-4</div><div style="position:absolute;left:98px;top:842px;width:456px;height:1px;background:#d3d7e2;box-sizing:border-box;"></div><div style="position:absolute;top:845.9px;font-size:14.3px;line-height:17.2px;color:#16921a;white-space:nowrap;right:1736.5px;">1.425</div><div style="position:absolute;top:845.9px;font-size:14.3px;line-height:17.2px;color:#111;white-space:nowrap;right:1660.5px;">-1.15</div><div style="position:absolute;top:845.9px;font-size:14.3px;line-height:17.2px;color:#111;white-space:nowrap;right:1584.5px;">-0.48</div><div style="position:absolute;left:173px;top:449px;width:1px;height:412px;background:#d3d7e2;box-sizing:border-box;"></div><div style="position:absolute;left:249px;top:449px;width:1px;height:412px;background:#d3d7e2;box-sizing:border-box;"></div><div style="position:absolute;left:325px;top:449px;width:1px;height:412px;background:#d3d7e2;box-sizing:border-box;"></div><div style="position:absolute;left:401px;top:449px;width:1px;height:412px;background:#d3d7e2;box-sizing:border-box;"></div><div style="position:absolute;left:477px;top:449px;width:1px;height:412px;background:#d3d7e2;box-sizing:border-box;"></div><div style="position:absolute;left:559px;top:448px;width:458px;height:414px;background:#fff;box-sizing:border-box;border:1px solid #aab3c4;"></div><div style="position:absolute;left:560px;top:449px;width:456px;height:25px;background:#f6f7fb;box-sizing:border-box;"></div><div style="position:absolute;top:453.4px;font-size:14.3px;line-height:17.2px;color:#222a36;white-space:nowrap;left:545.5px;width:100px;text-align:center;">Mid</div><div style="position:absolute;top:453.4px;font-size:14.3px;line-height:17.2px;color:#222a36;white-space:nowrap;left:617.5px;width:100px;text-align:center;">Delta</div><div style="position:absolute;top:453.4px;font-size:14.3px;line-height:17.2px;color:#222a36;white-space:nowrap;left:689.5px;width:100px;text-align:center;">Theta</div><div style="position:absolute;top:453.4px;font-size:14.3px;line-height:17.2px;color:#222a36;white-space:nowrap;left:761.5px;width:100px;text-align:center;">OrigPrice</div><div style="position:absolute;top:453.4px;font-size:14.3px;line-height:17.2px;color:#222a36;white-space:nowrap;left:833.5px;width:100px;text-align:center;">Model</div><div style="position:absolute;top:453.4px;font-size:14.3px;line-height:17.2px;color:#222a36;white-space:nowrap;left:907.5px;width:100px;text-align:center;">Pos</div><div style="position:absolute;left:560px;top:475px;width:435px;height:22px;background:#c6e4ec;box-sizing:border-box;"></div><div style="position:absolute;left:560px;top:474px;width:435px;height:1px;background:#d3d7e2;box-sizing:border-box;"></div><div style="position:absolute;top:477.9px;font-size:14.3px;line-height:17.2px;color:#111;white-space:nowrap;right:1278.5px;">4.05</div><div style="position:absolute;top:477.9px;font-size:14.3px;line-height:17.2px;color:#111;white-space:nowrap;right:1206.5px;">-4.55</div><div style="position:absolute;top:477.9px;font-size:14.3px;line-height:17.2px;color:#111;white-space:nowrap;right:1134.5px;">-0.89</div><div style="position:absolute;left:560px;top:497px;width:435px;height:1px;background:#d3d7e2;box-sizing:border-box;"></div><div style="position:absolute;top:500.9px;font-size:14.3px;line-height:17.2px;color:#f41414;white-space:nowrap;right:1278.5px;">3.60</div><div style="position:absolute;top:500.9px;font-size:14.3px;line-height:17.2px;color:#111;white-space:nowrap;right:1206.5px;">-3.98</div><div style="position:absolute;top:500.9px;font-size:14.3px;line-height:17.2px;color:#111;white-space:nowrap;right:1134.5px;">-0.83</div><div style="position:absolute;left:560px;top:520px;width:435px;height:1px;background:#d3d7e2;box-sizing:border-box;"></div><div style="position:absolute;top:523.9px;font-size:14.3px;line-height:17.2px;color:#111;white-space:nowrap;right:1278.5px;">3.275</div><div style="position:absolute;top:523.9px;font-size:14.3px;line-height:17.2px;color:#111;white-space:nowrap;right:1206.5px;">-3.55</div><div style="position:absolute;top:523.9px;font-size:14.3px;line-height:17.2px;color:#111;white-space:nowrap;right:1134.5px;">-0.79</div><div style="position:absolute;left:560px;top:543px;width:435px;height:1px;background:#d3d7e2;box-sizing:border-box;"></div><div style="position:absolute;top:546.9px;font-size:14.3px;line-height:17.2px;color:#111;white-space:nowrap;right:1278.5px;">2.975</div><div style="position:absolute;top:546.9px;font-size:14.3px;line-height:17.2px;color:#111;white-space:nowrap;right:1206.5px;">-3.16</div><div style="position:absolute;top:546.9px;font-size:14.3px;line-height:17.2px;color:#111;white-space:nowrap;right:1134.5px;">-0.74</div><div style="position:absolute;left:560px;top:566px;width:435px;height:1px;background:#d3d7e2;box-sizing:border-box;"></div><div style="position:absolute;top:569.9px;font-size:14.3px;line-height:17.2px;color:#111;white-space:nowrap;right:1278.5px;">2.725</div><div style="position:absolute;top:569.9px;font-size:14.3px;line-height:17.2px;color:#111;white-space:nowrap;right:1206.5px;">-2.84</div><div style="position:absolute;top:569.9px;font-size:14.3px;line-height:17.2px;color:#111;white-space:nowrap;right:1134.5px;">-0.71</div><div style="position:absolute;left:560px;top:589px;width:435px;height:1px;background:#d3d7e2;box-sizing:border-box;"></div><div style="position:absolute;top:592.9px;font-size:14.3px;line-height:17.2px;color:#111;white-space:nowrap;right:1278.5px;">2.525</div><div style="position:absolute;top:592.9px;font-size:14.3px;line-height:17.2px;color:#111;white-space:nowrap;right:1206.5px;">-2.57</div><div style="position:absolute;top:592.9px;font-size:14.3px;line-height:17.2px;color:#111;white-space:nowrap;right:1134.5px;">-0.67</div><div style="position:absolute;left:560px;top:612px;width:435px;height:1px;background:#d3d7e2;box-sizing:border-box;"></div><div style="position:absolute;top:615.9px;font-size:14.3px;line-height:17.2px;color:#111;white-space:nowrap;right:1278.5px;">2.325</div><div style="position:absolute;top:615.9px;font-size:14.3px;line-height:17.2px;color:#111;white-space:nowrap;right:1206.5px;">-2.33</div><div style="position:absolute;top:615.9px;font-size:14.3px;line-height:17.2px;color:#111;white-space:nowrap;right:1134.5px;">-0.64</div><div style="position:absolute;left:560px;top:635px;width:435px;height:1px;background:#d3d7e2;box-sizing:border-box;"></div><div style="position:absolute;top:638.9px;font-size:14.3px;line-height:17.2px;color:#f41414;white-space:nowrap;right:1278.5px;">2.175</div><div style="position:absolute;top:638.9px;font-size:14.3px;line-height:17.2px;color:#111;white-space:nowrap;right:1206.5px;">-2.13</div><div style="position:absolute;top:638.9px;font-size:14.3px;line-height:17.2px;color:#111;white-space:nowrap;right:1134.5px;">-0.62</div><div style="position:absolute;left:560px;top:658px;width:435px;height:1px;background:#d3d7e2;box-sizing:border-box;"></div><div style="position:absolute;top:661.9px;font-size:14.3px;line-height:17.2px;color:#f41414;white-space:nowrap;right:1278.5px;">2.025</div><div style="position:absolute;top:661.9px;font-size:14.3px;line-height:17.2px;color:#111;white-space:nowrap;right:1206.5px;">-1.94</div><div style="position:absolute;top:661.9px;font-size:14.3px;line-height:17.2px;color:#111;white-space:nowrap;right:1134.5px;">-0.59</div><div style="position:absolute;left:560px;top:681px;width:435px;height:1px;background:#d3d7e2;box-sizing:border-box;"></div><div style="position:absolute;top:684.9px;font-size:14.3px;line-height:17.2px;color:#16921a;white-space:nowrap;right:1278.5px;">2.175</div><div style="position:absolute;top:684.9px;font-size:14.3px;line-height:17.2px;color:#111;white-space:nowrap;right:1206.5px;">-1.98</div><div style="position:absolute;top:684.9px;font-size:14.3px;line-height:17.2px;color:#111;white-space:nowrap;right:1134.5px;">-0.63</div><div style="position:absolute;left:560px;top:704px;width:435px;height:1px;background:#d3d7e2;box-sizing:border-box;"></div><div style="position:absolute;top:707.9px;font-size:14.3px;line-height:17.2px;color:#f41414;white-space:nowrap;right:1278.5px;">1.80</div><div style="position:absolute;top:707.9px;font-size:14.3px;line-height:17.2px;color:#111;white-space:nowrap;right:1206.5px;">-1.65</div><div style="position:absolute;top:707.9px;font-size:14.3px;line-height:17.2px;color:#111;white-space:nowrap;right:1134.5px;">-0.55</div><div style="position:absolute;left:560px;top:727px;width:435px;height:1px;background:#d3d7e2;box-sizing:border-box;"></div><div style="position:absolute;top:730.9px;font-size:14.3px;line-height:17.2px;color:#f41414;white-space:nowrap;right:1278.5px;">1.70</div><div style="position:absolute;top:730.9px;font-size:14.3px;line-height:17.2px;color:#111;white-space:nowrap;right:1206.5px;">-1.53</div><div style="position:absolute;top:730.9px;font-size:14.3px;line-height:17.2px;color:#111;white-space:nowrap;right:1134.5px;">-0.53</div><div style="position:absolute;left:560px;top:750px;width:435px;height:1px;background:#d3d7e2;box-sizing:border-box;"></div><div style="position:absolute;top:753.9px;font-size:14.3px;line-height:17.2px;color:#f41414;white-space:nowrap;right:1278.5px;">1.60</div><div style="position:absolute;top:753.9px;font-size:14.3px;line-height:17.2px;color:#111;white-space:nowrap;right:1206.5px;">-1.41</div><div style="position:absolute;top:753.9px;font-size:14.3px;line-height:17.2px;color:#111;white-space:nowrap;right:1134.5px;">-0.51</div><div style="position:absolute;left:560px;top:773px;width:435px;height:1px;background:#d3d7e2;box-sizing:border-box;"></div><div style="position:absolute;top:776.9px;font-size:14.3px;line-height:17.2px;color:#f41414;white-space:nowrap;right:1278.5px;">1.50</div><div style="position:absolute;top:776.9px;font-size:14.3px;line-height:17.2px;color:#111;white-space:nowrap;right:1206.5px;">-1.30</div><div style="position:absolute;top:776.9px;font-size:14.3px;line-height:17.2px;color:#111;white-space:nowrap;right:1134.5px;">-0.48</div><div style="position:absolute;left:560px;top:796px;width:435px;height:1px;background:#d3d7e2;box-sizing:border-box;"></div><div style="position:absolute;top:799.9px;font-size:14.3px;line-height:17.2px;color:#f41414;white-space:nowrap;right:1278.5px;">1.425</div><div style="position:absolute;top:799.9px;font-size:14.3px;line-height:17.2px;color:#111;white-space:nowrap;right:1206.5px;">-1.22</div><div style="position:absolute;top:799.9px;font-size:14.3px;line-height:17.2px;color:#111;white-space:nowrap;right:1134.5px;">-0.47</div><div style="position:absolute;left:560px;top:819px;width:435px;height:1px;background:#d3d7e2;box-sizing:border-box;"></div><div style="position:absolute;top:822.9px;font-size:14.3px;line-height:17.2px;color:#f41414;white-space:nowrap;right:1278.5px;">1.30</div><div style="position:absolute;top:822.9px;font-size:14.3px;line-height:17.2px;color:#111;white-space:nowrap;right:1206.5px;">-1.10</div><div style="position:absolute;top:822.9px;font-size:14.3px;line-height:17.2px;color:#111;white-space:nowrap;right:1134.5px;">-0.44</div><div style="position:absolute;left:560px;top:842px;width:435px;height:1px;background:#d3d7e2;box-sizing:border-box;"></div><div style="position:absolute;top:845.9px;font-size:14.3px;line-height:17.2px;color:#f41414;white-space:nowrap;right:1278.5px;">1.225</div><div style="position:absolute;top:845.9px;font-size:14.3px;line-height:17.2px;color:#111;white-space:nowrap;right:1206.5px;">-1.02</div><div style="position:absolute;top:845.9px;font-size:14.3px;line-height:17.2px;color:#111;white-space:nowrap;right:1134.5px;">-0.42</div><div style="position:absolute;left:631px;top:449px;width:1px;height:412px;background:#d3d7e2;box-sizing:border-box;"></div><div style="position:absolute;left:703px;top:449px;width:1px;height:412px;background:#d3d7e2;box-sizing:border-box;"></div><div style="position:absolute;left:775px;top:449px;width:1px;height:412px;background:#d3d7e2;box-sizing:border-box;"></div><div style="position:absolute;left:847px;top:449px;width:1px;height:412px;background:#d3d7e2;box-sizing:border-box;"></div><div style="position:absolute;left:919px;top:449px;width:1px;height:412px;background:#d3d7e2;box-sizing:border-box;"></div><div style="position:absolute;left:995px;top:449px;width:1px;height:25px;background:#d3d7e2;box-sizing:border-box;"></div><div style="position:absolute;left:995px;top:475px;width:21px;height:386px;background:#d1d7e6;box-sizing:border-box;"></div><div style="position:absolute;left:995px;top:474px;width:21px;height:1px;background:#d3d7e2;box-sizing:border-box;"></div><svg style="position:absolute;left:998px;top:478px;" width="16" height="380" viewBox="0 0 16 380"><path d="M3 10 H12 L7.5 5 Z" fill="#5e6c86"/><rect x="2" y="170" width="12" height="25" fill="#8e97a8"/><path d="M3 371 H12 L7.5 376 Z" fill="#5e6c86"/></svg><svg style="position:absolute;left:1024px;top:582px;" width="3" height="18" viewBox="0 0 3 18"><rect x="0" y="0" width="1" height="1" fill="#9aa2b4"/><rect x="2" y="1" width="1" height="1" fill="#9aa2b4"/><rect x="0" y="2" width="1" height="1" fill="#9aa2b4"/><rect x="2" y="3" width="1" height="1" fill="#9aa2b4"/><rect x="0" y="4" width="1" height="1" fill="#9aa2b4"/><rect x="2" y="5" width="1" height="1" fill="#9aa2b4"/><rect x="0" y="6" width="1" height="1" fill="#9aa2b4"/><rect x="2" y="7" width="1" height="1" fill="#9aa2b4"/><rect x="0" y="8" width="1" height="1" fill="#9aa2b4"/><rect x="2" y="9" width="1" height="1" fill="#9aa2b4"/><rect x="0" y="10" width="1" height="1" fill="#9aa2b4"/><rect x="2" y="11" width="1" height="1" fill="#9aa2b4"/><rect x="0" y="12" width="1" height="1" fill="#9aa2b4"/><rect x="2" y="13" width="1" height="1" fill="#9aa2b4"/><rect x="0" y="14" width="1" height="1" fill="#9aa2b4"/><rect x="2" y="15" width="1" height="1" fill="#9aa2b4"/><rect x="0" y="16" width="1" height="1" fill="#9aa2b4"/><rect x="2" y="17" width="1" height="1" fill="#9aa2b4"/></svg><div style="position:absolute;left:12px;top:878px;width:1006px;height:26px;background:#d0d6e4;box-sizing:border-box;"></div><div style="position:absolute;top:883.4px;font-size:14.3px;line-height:17.2px;color:#1e2b3e;white-space:nowrap;left:20px;">Trade Analysis</div><div style="position:absolute;left:126px;top:880px;width:187px;height:24px;background:#fff;box-sizing:border-box;border:1px solid #a6b1c3;"></div><div style="position:absolute;top:884.4px;font-size:14.3px;line-height:17.2px;color:#111;white-space:nowrap;left:131px;">Combined</div><svg style="position:absolute;left:297px;top:889px;" width="9" height="5" viewBox="0 0 9 5"><path d="M0 0 H9 L4.5 5 Z" fill="#5a6070"/></svg><div style="position:absolute;left:323px;top:880px;width:100px;height:24px;background:#fff;box-sizing:border-box;border:1px solid #a6b1c3;"></div><div style="position:absolute;top:884.4px;font-size:14.3px;line-height:17.2px;color:#111;white-space:nowrap;left:328px;">Auto</div><svg style="position:absolute;left:407px;top:889px;" width="9" height="5" viewBox="0 0 9 5"><path d="M0 0 H9 L4.5 5 Z" fill="#5a6070"/></svg><div style="position:absolute;left:845px;top:884px;width:13px;height:13px;background:#fff;box-sizing:border-box;border:1px solid #8a93a6;"></div><div style="position:absolute;top:883.4px;font-size:14.3px;line-height:17.2px;color:#1e2b3e;white-space:nowrap;left:862.5px;">Ignore Today's Trades</div><div style="position:absolute;left:13px;top:908px;width:1005px;height:73px;background:#fff;box-sizing:border-box;border:1px solid #aab3c4;"></div><div style="position:absolute;left:14px;top:909px;width:1003px;height:25px;background:#f6f7fb;box-sizing:border-box;"></div><div style="position:absolute;left:14px;top:934px;width:1003px;height:1px;background:#d3d7e2;box-sizing:border-box;"></div><div style="position:absolute;left:14px;top:957px;width:1003px;height:1px;background:#d3d7e2;box-sizing:border-box;"></div><div style="position:absolute;left:90px;top:909px;width:1px;height:71px;background:#d3d7e2;box-sizing:border-box;"></div><div style="position:absolute;left:167px;top:909px;width:1px;height:71px;background:#d3d7e2;box-sizing:border-box;"></div><div style="position:absolute;left:244px;top:909px;width:1px;height:71px;background:#d3d7e2;box-sizing:border-box;"></div><div style="position:absolute;left:321px;top:909px;width:1px;height:71px;background:#d3d7e2;box-sizing:border-box;"></div><div style="position:absolute;left:398px;top:909px;width:1px;height:71px;background:#d3d7e2;box-sizing:border-box;"></div><div style="position:absolute;left:475px;top:909px;width:1px;height:71px;background:#d3d7e2;box-sizing:border-box;"></div><div style="position:absolute;left:552px;top:909px;width:1px;height:71px;background:#d3d7e2;box-sizing:border-box;"></div><div style="position:absolute;left:629px;top:909px;width:1px;height:71px;background:#d3d7e2;box-sizing:border-box;"></div><div style="position:absolute;left:706px;top:909px;width:1px;height:71px;background:#d3d7e2;box-sizing:border-box;"></div><div style="position:absolute;left:783px;top:909px;width:1px;height:71px;background:#d3d7e2;box-sizing:border-box;"></div><div style="position:absolute;left:860px;top:909px;width:1px;height:71px;background:#d3d7e2;box-sizing:border-box;"></div><div style="position:absolute;left:937px;top:909px;width:1px;height:71px;background:#d3d7e2;box-sizing:border-box;"></div><div style="position:absolute;top:913.4px;font-size:14.3px;line-height:17.2px;color:#222a36;white-space:nowrap;left:13.5px;width:77px;text-align:center;">Analysis</div><div style="position:absolute;top:913.4px;font-size:14.3px;line-height:17.2px;color:#222a36;white-space:nowrap;left:90.5px;width:77px;text-align:center;">Margin</div><div style="position:absolute;top:913.4px;font-size:14.3px;line-height:17.2px;color:#222a36;white-space:nowrap;left:167.5px;width:77px;text-align:center;">Cost</div><div style="position:absolute;top:913.4px;font-size:14.3px;line-height:17.2px;color:#222a36;white-space:nowrap;left:244.5px;width:77px;text-align:center;">Curr Cost</div><div style="position:absolute;top:913.4px;font-size:14.3px;line-height:17.2px;color:#222a36;white-space:nowrap;left:321.5px;width:77px;text-align:center;">Commis...</div><div style="position:absolute;top:913.4px;font-size:14.3px;line-height:17.2px;color:#222a36;white-space:nowrap;left:398.5px;width:77px;text-align:center;">PnL</div><div style="position:absolute;top:913.4px;font-size:14.3px;line-height:17.2px;color:#222a36;white-space:nowrap;left:475.5px;width:77px;text-align:center;">PnL%</div><div style="position:absolute;top:913.4px;font-size:14.3px;line-height:17.2px;color:#222a36;white-space:nowrap;left:552.5px;width:77px;text-align:center;">Delta</div><div style="position:absolute;top:913.4px;font-size:14.3px;line-height:17.2px;color:#222a36;white-space:nowrap;left:629.5px;width:77px;text-align:center;">Gamma</div><div style="position:absolute;top:913.4px;font-size:14.3px;line-height:17.2px;color:#222a36;white-space:nowrap;left:706.5px;width:77px;text-align:center;">Theta</div><div style="position:absolute;top:913.4px;font-size:14.3px;line-height:17.2px;color:#222a36;white-space:nowrap;left:783.5px;width:77px;text-align:center;">Vega</div><div style="position:absolute;top:913.4px;font-size:14.3px;line-height:17.2px;color:#222a36;white-space:nowrap;left:860.5px;width:77px;text-align:center;">T/D</div><div style="position:absolute;top:913.4px;font-size:14.3px;line-height:17.2px;color:#222a36;white-space:nowrap;left:937.5px;width:80px;text-align:center;">Plot</div><div style="position:absolute;top:937.9px;font-size:14.3px;line-height:17.2px;color:#111;white-space:nowrap;right:1742.5px;">34,110.20</div><div style="position:absolute;top:937.9px;font-size:14.3px;line-height:17.2px;color:#111;white-space:nowrap;right:1665.5px;">-451.40</div><div style="position:absolute;top:937.9px;font-size:14.3px;line-height:17.2px;color:#111;white-space:nowrap;right:1588.5px;">751.25</div><div style="position:absolute;top:937.9px;font-size:14.3px;line-height:17.2px;color:#111;white-space:nowrap;right:1511.5px;">28.90</div><div style="position:absolute;top:937.9px;font-size:14.3px;line-height:17.2px;color:#16921a;white-space:nowrap;right:1434.5px;">299.85</div><div style="position:absolute;top:937.9px;font-size:14.3px;line-height:17.2px;color:#16921a;white-space:nowrap;right:1357.5px;">0.88%</div><div style="position:absolute;top:937.9px;font-size:14.3px;line-height:17.2px;color:#111;white-space:nowrap;right:1280.5px;">3.14</div><div style="position:absolute;top:937.9px;font-size:14.3px;line-height:17.2px;color:#111;white-space:nowrap;right:1203.5px;">-0.05</div><div style="position:absolute;top:937.9px;font-size:14.3px;line-height:17.2px;color:#111;white-space:nowrap;right:1126.5px;">85.97</div><div style="position:absolute;top:937.9px;font-size:14.3px;line-height:17.2px;color:#111;white-space:nowrap;right:1049.5px;">80.17</div><div style="position:absolute;top:937.9px;font-size:14.3px;line-height:17.2px;color:#111;white-space:nowrap;right:972.5px;">27.4</div><div style="position:absolute;top:960.9px;font-size:14.3px;line-height:17.2px;color:#111;white-space:nowrap;right:1280.5px;">0.00</div><div style="position:absolute;top:960.9px;font-size:14.3px;line-height:17.2px;color:#111;white-space:nowrap;right:1203.5px;">0.00</div><div style="position:absolute;top:960.9px;font-size:14.3px;line-height:17.2px;color:#111;white-space:nowrap;right:1126.5px;">0.00</div><div style="position:absolute;top:960.9px;font-size:14.3px;line-height:17.2px;color:#111;white-space:nowrap;right:1049.5px;">0.00</div><div style="position:absolute;top:960.9px;font-size:14.3px;line-height:17.2px;color:#111;white-space:nowrap;right:972.5px;">0</div><svg style="position:absolute;left:17px;top:941px;" width="10" height="10" viewBox="0 0 10 10"><rect x="0.5" y="0.5" width="9" height="9" fill="#fff" stroke="#555"/><path d="M2.5 5 H7.5 M5 2.5 V7.5" stroke="#333" stroke-width="1.1"/></svg><div style="position:absolute;top:938.4px;font-size:14.3px;line-height:17.2px;color:#1a6fd6;white-space:nowrap;left:35.5px;">Position</div><svg style="position:absolute;left:17px;top:964px;" width="10" height="10" viewBox="0 0 10 10"><rect x="0.5" y="0.5" width="9" height="9" fill="#fff" stroke="#bbb"/><path d="M2.5 5 H7.5 M5 2.5 V7.5" stroke="#bbb" stroke-width="1.1"/></svg><div style="position:absolute;top:961.4px;font-size:14.3px;line-height:17.2px;color:#1a9a1a;white-space:nowrap;left:35.5px;">Model</div><svg style="position:absolute;left:971px;top:939px;" width="13" height="13" viewBox="0 0 13 13"><rect x="0.5" y="0.5" width="12" height="12" fill="#fff" stroke="#8a93a6"/><path d="M3 6.5 L5.5 9.5 L10.5 3" fill="none" stroke="#5a6a88" stroke-width="1.4"/></svg><svg style="position:absolute;left:971px;top:962px;" width="13" height="13" viewBox="0 0 13 13"><rect x="0.5" y="0.5" width="12" height="12" fill="#fff" stroke="#8a93a6"/><path d="M3 6.5 L5.5 9.5 L10.5 3" fill="none" stroke="#5a6a88" stroke-width="1.4"/></svg><div style="position:absolute;left:1033px;top:201.5px;width:873px;height:748px;background:#d5dae8;box-sizing:border-box;"></div><div style="position:absolute;left:1033px;top:201.5px;width:1px;height:748px;background:#a4aebf;box-sizing:border-box;"></div><div style="position:absolute;left:1033px;top:201.5px;width:95px;height:1px;background:#a4aebf;box-sizing:border-box;"></div><div style="position:absolute;top:209.4px;font-size:14.3px;line-height:17.2px;color:#1e2b3e;white-space:nowrap;left:1034.0px;width:93.5px;text-align:center;">Risk Chart</div><div style="position:absolute;left:1127.5px;top:201.5px;width:99.0px;height:32.5px;background:#cfd5e3;box-sizing:border-box;border:1px solid #a4aebf;"></div><div style="position:absolute;top:209.4px;font-size:14.3px;line-height:17.2px;color:#1e2b3e;white-space:nowrap;left:1127.5px;width:98.0px;text-align:center;">Price Chart</div><div style="position:absolute;left:1225.5px;top:201.5px;width:155.0px;height:32.5px;background:#cfd5e3;box-sizing:border-box;border:1px solid #a4aebf;"></div><div style="position:absolute;top:209.4px;font-size:14.3px;line-height:17.2px;color:#1e2b3e;white-space:nowrap;left:1225.5px;width:154.0px;text-align:center;">Movement Analysis</div><div style="position:absolute;left:1379.5px;top:201.5px;width:80.0px;height:32.5px;background:#cfd5e3;box-sizing:border-box;border:1px solid #a4aebf;"></div><div style="position:absolute;top:209.4px;font-size:14.3px;line-height:17.2px;color:#1e2b3e;white-space:nowrap;left:1379.5px;width:79.0px;text-align:center;">Volatility</div><div style="position:absolute;left:1458.5px;top:201.5px;width:195.5px;height:32.5px;background:#cfd5e3;box-sizing:border-box;border:1px solid #a4aebf;"></div><div style="position:absolute;top:209.4px;font-size:14.3px;line-height:17.2px;color:#1e2b3e;white-space:nowrap;left:1458.5px;width:194.5px;text-align:center;">Statistics &amp; Fundamentals</div><div style="position:absolute;left:1653px;top:233.5px;width:252px;height:1px;background:#a4aebf;box-sizing:border-box;"></div><div style="position:absolute;left:1903.5px;top:233.5px;width:1px;height:716px;background:#a4aebf;box-sizing:border-box;"></div><div style="position:absolute;top:241.6px;font-size:14.3px;line-height:17.2px;color:#1e2b3e;white-space:nowrap;left:1041px;">Vol Adjust</div><div style="position:absolute;left:1112px;top:237.5px;width:66px;height:23.5px;background:#fff;box-sizing:border-box;border:1px solid #a6b1c3;"></div><div style="position:absolute;top:241.4px;font-size:14.3px;line-height:17.2px;color:#111;white-space:nowrap;right:752px;">0</div><svg style="position:absolute;left:1161px;top:241px;" width="12" height="17" viewBox="0 0 12 17"><path d="M2 6 H10 L6 2 Z M2 11 H10 L6 15 Z" fill="#6e7a8e"/></svg><div style="position:absolute;top:241.6px;font-size:14.3px;line-height:17.2px;color:#1e2b3e;white-space:nowrap;left:1603px;">Projection</div><div style="position:absolute;left:1672px;top:237.5px;width:225px;height:24px;background:#fff;box-sizing:border-box;border:1px solid #a6b1c3;"></div><div style="position:absolute;top:241.6px;font-size:14.3px;line-height:17.2px;color:#111;white-space:nowrap;left:1676px;">09/06/2025</div><svg style="position:absolute;left:1771px;top:248px;" width="9" height="5" viewBox="0 0 9 5"><path d="M0 0 H9 L4.5 5 Z" fill="#8a93a6"/></svg><div style="position:absolute;top:241.6px;font-size:14.3px;line-height:17.2px;color:#111;white-space:nowrap;left:1792px;">T+0</div><div style="position:absolute;top:241.6px;font-size:14.3px;line-height:17.2px;color:#111;white-space:nowrap;left:1829.5px;">2Ln</div><svg style="position:absolute;left:1863px;top:245px;" width="6" height="9" viewBox="0 0 6 9"><path d="M6 0 V9 L0 4.5 Z" fill="#222"/></svg><svg style="position:absolute;left:1883px;top:245px;" width="6" height="9" viewBox="0 0 6 9"><path d="M0 0 V9 L6 4.5 Z" fill="#222"/></svg><svg style="position:absolute;left:0;top:0" width="1906" height="982" viewBox="0 0 1906 982"><rect x="1034" y="264.5" width="869.5" height="685.5" fill="#fff"/><rect x="1337" y="288" width="62" height="400" fill="#93cdd9"/><rect x="1399" y="288" width="123" height="400" fill="#4f81bc"/><rect x="1522" y="288" width="63" height="400" fill="#93cdd9"/><rect x="1522" y="288" width="1" height="400" fill="#5d8fd2"/><rect x="1099" y="287" width="741" height="1" fill="#dcdcdc"/><rect x="1099" y="320" width="741" height="1" fill="#dcdcdc"/><rect x="1099" y="354" width="741" height="1" fill="#dcdcdc"/><rect x="1099" y="387" width="741" height="1" fill="#dcdcdc"/><rect x="1099" y="421" width="741" height="1" fill="#dcdcdc"/><rect x="1099" y="454" width="741" height="1" fill="#dcdcdc"/><rect x="1099" y="488" width="741" height="1" fill="#dcdcdc"/><rect x="1099" y="521" width="741" height="1" fill="#dcdcdc"/><rect x="1099" y="554" width="741" height="1" fill="#dcdcdc"/><rect x="1099" y="588" width="741" height="1" fill="#dcdcdc"/><rect x="1099" y="621" width="741" height="1" fill="#dcdcdc"/><rect x="1099" y="655" width="741" height="1" fill="#dcdcdc"/><rect x="1099" y="688" width="741" height="1" fill="#dcdcdc"/><rect x="1156" y="283" width="1" height="410" fill="#dcdcdc"/><rect x="1229" y="283" width="1" height="410" fill="#dcdcdc"/><rect x="1302" y="283" width="1" height="410" fill="#dcdcdc"/><rect x="1375" y="283" width="1" height="410" fill="#dcdcdc"/><rect x="1448" y="283" width="1" height="410" fill="#dcdcdc"/><rect x="1521" y="283" width="1" height="410" fill="#dcdcdc"/><rect x="1594" y="283" width="1" height="410" fill="#dcdcdc"/><rect x="1668" y="283" width="1" height="410" fill="#dcdcdc"/><rect x="1741" y="283" width="1" height="410" fill="#dcdcdc"/><rect x="1814" y="283" width="1" height="410" fill="#dcdcdc"/><rect x="1103" y="287" width="1" height="402" fill="#dcdcdc"/><rect x="1835" y="287" width="1" height="402" fill="#dcdcdc"/><rect x="1104" y="421" width="731" height="1.3" fill="#000"/><text transform="translate(1351.0 338) rotate(-90)" font-size="13" fill="#5c8fc8">5923.76</text><text transform="translate(1412.2 338) rotate(-90)" font-size="13" fill="#a6c0e2">5966.01</text><text transform="translate(1520.5 338) rotate(-90)" font-size="13" fill="#a6c0e2">6050.49</text><text transform="translate(1582.5 338) rotate(-90)" font-size="13" fill="#5c8fc8">6092.74</text><path d="M1684.5 288 V688" stroke="#9a109a" stroke-width="1.5" stroke-dasharray="5 3"/><text transform="translate(1684 685) rotate(-90)" font-size="13" fill="#9a109a">6161.10</text><text x="1375" y="677.5" font-size="12.9" fill="#8a1a9a">82.3%</text><text x="1742" y="677.5" font-size="12.9" fill="#8a1a9a">17.7%</text><path d="M1104.0 524.0 L1107.0 520.1 L1110.0 516.3 L1113.0 512.6 L1116.0 508.9 L1119.0 505.3 L1122.0 501.7 L1125.0 498.1 L1128.0 494.7 L1131.0 491.2 L1134.0 487.9 L1137.0 484.6 L1140.0 481.3 L1143.0 478.1 L1146.0 475.0 L1149.0 471.9 L1152.0 468.9 L1155.0 465.9 L1158.0 463.0 L1161.0 460.1 L1164.0 457.4 L1167.0 454.6 L1170.0 452.0 L1173.0 449.3 L1176.0 446.8 L1179.0 444.3 L1182.0 441.9 L1185.0 439.5 L1188.0 437.1 L1191.0 434.9 L1194.0 432.7 L1197.0 430.5 L1200.0 428.4 L1203.0 426.4 L1206.0 424.4 L1209.0 422.4 L1212.0 420.6 L1215.0 418.7 L1218.0 416.9 L1221.0 415.2 L1224.0 413.5 L1227.0 411.9 L1230.0 410.3 L1233.0 408.8 L1236.0 407.3 L1239.0 405.9 L1242.0 404.5 L1245.0 403.2 L1248.0 401.9 L1251.0 400.6 L1254.0 399.4 L1257.0 398.3 L1260.0 397.1 L1263.0 396.1 L1266.0 395.0 L1269.0 394.0 L1272.0 393.1 L1275.0 392.2 L1278.0 391.3 L1281.0 390.4 L1284.0 389.6 L1287.0 388.8 L1290.0 388.1 L1293.0 387.4 L1296.0 386.7 L1299.0 386.1 L1302.0 385.5 L1305.0 384.9 L1308.0 384.4 L1311.0 383.9 L1314.0 383.4 L1317.0 382.9 L1320.0 382.5 L1323.0 382.1 L1326.0 381.7 L1329.0 381.3 L1332.0 381.0 L1335.0 380.7 L1338.0 380.4 L1341.0 380.2 L1344.0 379.9 L1347.0 379.7 L1350.0 379.5 L1353.0 379.4 L1356.0 379.2 L1359.0 379.1 L1362.0 379.0 L1365.0 378.9 L1368.0 378.8 L1371.0 378.7 L1374.0 378.7 L1377.0 378.7 L1380.0 378.7 L1383.0 378.7 L1386.0 378.7 L1389.0 378.7 L1392.0 378.8 L1395.0 378.8 L1398.0 378.9 L1401.0 379.0 L1404.0 379.1 L1407.0 379.2 L1410.0 379.3 L1413.0 379.5 L1416.0 379.6 L1419.0 379.8 L1422.0 379.9 L1425.0 380.1 L1428.0 380.3 L1431.0 380.5 L1434.0 380.7 L1437.0 380.9 L1440.0 381.1 L1443.0 381.4 L1446.0 381.6 L1449.0 381.8 L1452.0 382.1 L1455.0 382.3 L1458.0 382.6 L1461.0 382.9 L1464.0 383.1 L1467.0 383.4 L1470.0 383.7 L1473.0 384.0 L1476.0 384.3 L1479.0 384.6 L1482.0 384.9 L1485.0 385.2 L1488.0 385.6 L1491.0 385.9 L1494.0 386.2 L1497.0 386.5 L1500.0 386.9 L1503.0 387.2 L1506.0 387.6 L1509.0 387.9 L1512.0 388.3 L1515.0 388.6 L1518.0 389.0 L1521.0 389.3 L1524.0 389.7 L1527.0 390.1 L1530.0 390.4 L1533.0 390.8 L1536.0 391.2 L1539.0 391.6 L1542.0 391.9 L1545.0 392.3 L1548.0 392.7 L1551.0 393.1 L1554.0 393.5 L1557.0 393.9 L1560.0 394.3 L1563.0 394.6 L1566.0 395.0 L1569.0 395.4 L1572.0 395.8 L1575.0 396.2 L1578.0 396.6 L1581.0 397.0 L1584.0 397.4 L1587.0 397.8 L1590.0 398.2 L1593.0 398.6 L1596.0 399.0 L1599.0 399.4 L1602.0 399.7 L1605.0 400.1 L1608.0 400.5 L1611.0 400.9 L1614.0 401.3 L1617.0 401.7 L1620.0 402.1 L1623.0 402.5 L1626.0 402.8 L1629.0 403.2 L1632.0 403.6 L1635.0 404.0 L1638.0 404.3 L1641.0 404.7 L1644.0 405.1 L1647.0 405.4 L1650.0 405.8 L1653.0 406.2 L1656.0 406.5 L1659.0 406.9 L1662.0 407.2 L1665.0 407.5 L1668.0 407.9 L1671.0 408.2 L1674.0 408.5 L1677.0 408.9 L1680.0 409.2 L1683.0 409.5 L1686.0 409.8 L1689.0 410.1 L1692.0 410.4 L1695.0 410.7 L1698.0 411.0 L1701.0 411.3 L1704.0 411.6 L1707.0 411.9 L1710.0 412.2 L1713.0 412.5 L1716.0 412.7 L1719.0 413.0 L1722.0 413.2 L1725.0 413.5 L1728.0 413.8 L1731.0 414.0 L1734.0 414.2 L1737.0 414.5 L1740.0 414.7 L1743.0 415.0 L1746.0 415.2 L1749.0 415.4 L1752.0 415.7 L1755.0 415.9 L1758.0 416.1 L1761.0 416.3 L1764.0 416.6 L1767.0 416.8 L1770.0 417.0 L1773.0 417.2 L1776.0 417.5 L1779.0 417.7 L1782.0 417.9 L1785.0 418.2 L1788.0 418.4 L1791.0 418.7 L1794.0 418.9 L1797.0 419.2 L1800.0 419.5 L1803.0 419.7 L1806.0 420.0 L1809.0 420.4 L1812.0 420.7 L1815.0 421.0 L1818.0 421.4 L1821.0 421.8 L1824.0 422.2 L1827.0 422.6 L1830.0 423.0 L1833.0 423.5 L1835.0 423.8" fill="none" stroke="#f23c3c" stroke-width="1.3"/><path d="M1104 657.3 L1109.6 649.5" stroke="#f23c3c" stroke-width="1.5"/><path d="M1109.6 649.3 L1112.6 645.3 L1115.6 641.2 L1118.6 637.2 L1121.6 633.2 L1124.6 629.3 L1127.6 625.5 L1130.6 621.6 L1133.6 617.8 L1136.6 614.1 L1139.6 610.4 L1142.6 606.7 L1145.6 603.1 L1148.6 599.5 L1151.6 595.9 L1154.6 592.4 L1157.6 588.9 L1160.6 585.5 L1163.6 582.1 L1166.6 578.8 L1169.6 575.5 L1172.6 572.2 L1175.6 569.0 L1178.6 565.8 L1181.6 562.6 L1184.6 559.5 L1187.6 556.4 L1190.6 553.4 L1193.6 550.4 L1196.6 547.4 L1199.6 544.5 L1202.6 541.6 L1205.6 538.8 L1208.6 536.0 L1211.6 533.2 L1214.6 530.4 L1217.6 527.7 L1220.6 525.1 L1223.6 522.4 L1226.6 519.9 L1229.6 517.3 L1232.6 514.8 L1235.6 512.3 L1238.6 509.8 L1241.6 507.4 L1244.6 505.0 L1247.6 502.7 L1250.6 500.4 L1253.6 498.1 L1256.6 495.8 L1259.6 493.6 L1262.6 491.4 L1265.6 489.3 L1268.6 487.2 L1271.6 485.1 L1274.6 483.1 L1277.6 481.0 L1280.6 479.0 L1283.6 477.1 L1286.6 475.2 L1289.6 473.3 L1292.6 471.4 L1295.6 469.6 L1298.6 467.8 L1301.6 466.0 L1304.6 464.3 L1307.6 462.6 L1310.6 460.9 L1313.6 459.2 L1316.6 457.6 L1319.6 456.0 L1322.6 454.5 L1325.6 452.9 L1328.6 451.4 L1331.6 449.9 L1334.6 448.5 L1337.6 447.0 L1340.6 445.6 L1343.6 444.3 L1346.6 442.9 L1349.6 441.6 L1352.6 440.3 L1355.6 439.0 L1358.6 437.8 L1361.6 436.6 L1364.6 435.4 L1367.6 434.2 L1370.6 433.1 L1373.6 432.0 L1376.6 430.9 L1379.6 429.8 L1382.6 428.8 L1385.6 427.7 L1388.6 426.7 L1391.6 425.8 L1394.6 424.8 L1397.6 423.9 L1400.6 423.0 L1403.6 422.1 L1406.6 421.2 L1409.6 420.4 L1412.6 419.6 L1415.6 418.8 L1418.6 418.0 L1421.6 417.2 L1424.6 416.5 L1427.6 415.8 L1430.6 415.1 L1433.6 414.4 L1436.6 413.7 L1439.6 413.1 L1442.6 412.5 L1445.6 411.9 L1448.6 411.3 L1451.6 410.7 L1454.6 410.2 L1457.6 409.6 L1460.6 409.1 L1463.6 408.6 L1466.6 408.1 L1469.6 407.7 L1472.6 407.2 L1475.6 406.8 L1478.6 406.4 L1481.6 406.0 L1484.6 405.6 L1487.6 405.2 L1490.6 404.9 L1493.6 404.5 L1496.6 404.2 L1499.6 403.9 L1502.6 403.6 L1505.6 403.3 L1508.6 403.1 L1511.6 402.8 L1514.6 402.6 L1517.6 402.3 L1520.6 402.1 L1523.6 401.9 L1526.6 401.7 L1529.6 401.5 L1532.6 401.4 L1535.6 401.2 L1538.6 401.1 L1541.6 400.9 L1544.6 400.8 L1547.6 400.7 L1550.6 400.6 L1553.6 400.5 L1556.6 400.4 L1559.6 400.3 L1562.6 400.3 L1565.6 400.2 L1568.6 400.2 L1571.6 400.1 L1574.6 400.1 L1577.6 400.1 L1580.6 400.1 L1583.6 400.1 L1586.6 400.1 L1589.6 400.1 L1592.6 400.1 L1595.6 400.1 L1598.6 400.2 L1601.6 400.2 L1604.6 400.3 L1607.6 400.3 L1610.6 400.4 L1613.6 400.4 L1616.6 400.5 L1619.6 400.6 L1622.6 400.7 L1625.6 400.7 L1628.6 400.8 L1631.6 400.9 L1634.6 401.0 L1637.6 401.1 L1640.6 401.2 L1643.6 401.4 L1646.6 401.5 L1649.6 401.6 L1652.6 401.7 L1655.6 401.9 L1658.6 402.0 L1661.6 402.1 L1664.6 402.3 L1667.6 402.4 L1670.6 402.5 L1673.6 402.7 L1676.6 402.8 L1679.6 403.0 L1682.6 403.1 L1685.6 403.3 L1688.6 403.5 L1691.6 403.6 L1694.6 403.8 L1697.6 404.0 L1700.6 404.1 L1703.6 404.3 L1706.6 404.5 L1709.6 404.6 L1712.6 404.8 L1715.6 405.0 L1718.6 405.2 L1721.6 405.4 L1724.6 405.5 L1727.6 405.7 L1730.6 405.9 L1733.6 406.1 L1736.6 406.3 L1739.6 406.5 L1742.6 406.7 L1745.6 406.9 L1748.6 407.1 L1751.6 407.3 L1754.6 407.5 L1757.6 407.7 L1760.6 407.9 L1763.6 408.1 L1766.6 408.3 L1769.6 408.5 L1772.6 408.7 L1775.6 408.9 L1778.6 409.2 L1781.6 409.4 L1784.6 409.6 L1787.6 409.9 L1790.6 410.1 L1793.6 410.3 L1796.6 410.6 L1799.6 410.8 L1802.6 411.1 L1805.6 411.4 L1808.6 411.6 L1811.6 411.9 L1814.6 412.2 L1817.6 412.5 L1820.6 412.8 L1823.6 413.1 L1826.6 413.4 L1829.6 413.7 L1832.6 414.0 L1835.0 414.3" fill="none" stroke="#5b8cf0" stroke-width="1.3"/><path d="M1103.9 297.2 L1106.9 298.3 L1109.9 299.4 L1112.9 300.5 L1115.9 301.6 L1118.9 302.6 L1121.9 303.7 L1124.9 304.8 L1127.9 305.8 L1130.9 306.9 L1133.9 308.0 L1136.9 309.0 L1139.9 310.1 L1142.9 311.1 L1145.9 312.1 L1148.9 313.2 L1151.9 314.2 L1154.9 315.2 L1157.9 316.3 L1160.9 317.3 L1163.9 318.3 L1166.9 319.3 L1169.9 320.3 L1172.9 321.3 L1175.9 322.3 L1178.9 323.3 L1181.9 324.3 L1184.9 325.2 L1187.9 326.2 L1190.9 327.2 L1193.9 328.2 L1196.9 329.1 L1199.9 330.1 L1202.9 331.0 L1205.9 332.0 L1208.9 332.9 L1211.9 333.8 L1214.9 334.8 L1217.9 335.7 L1220.9 336.6 L1223.9 337.5 L1226.9 338.4 L1229.9 339.3 L1232.9 340.2 L1235.9 341.1 L1238.9 342.0 L1241.9 342.9 L1244.9 343.8 L1247.9 344.7 L1250.9 345.5 L1253.9 346.4 L1256.9 347.2 L1259.9 348.1 L1262.9 348.9 L1265.9 349.8 L1268.9 350.6 L1271.9 351.4 L1274.9 352.2 L1277.9 353.1 L1280.9 353.9 L1283.9 354.7 L1286.9 355.5 L1289.9 356.3 L1292.9 357.0 L1295.9 357.8 L1298.9 358.6 L1301.9 359.4 L1304.9 360.1 L1307.9 360.9 L1310.9 361.7 L1313.9 362.4 L1316.9 363.1 L1319.9 363.9 L1322.9 364.6 L1325.9 365.3 L1328.9 366.1 L1331.9 366.8 L1334.9 367.5 L1337.9 368.2 L1340.9 368.9 L1343.9 369.6 L1346.9 370.3 L1349.9 370.9 L1352.9 371.6 L1355.9 372.3 L1358.9 373.0 L1361.9 373.6 L1364.9 374.3 L1367.9 374.9 L1370.9 375.6 L1373.9 376.2 L1376.9 376.8 L1379.9 377.5 L1382.9 378.1 L1385.9 378.7 L1388.9 379.3 L1391.9 379.9 L1394.9 380.5 L1397.9 381.1 L1400.9 381.7 L1403.9 382.3 L1406.9 382.9 L1409.9 383.5 L1412.9 384.1 L1415.9 384.6 L1418.9 385.2 L1421.9 385.7 L1424.9 386.3 L1427.9 386.8 L1430.9 387.4 L1433.9 387.9 L1436.9 388.5 L1439.9 389.0 L1442.9 389.5 L1445.9 390.0 L1448.9 390.6 L1451.9 391.1 L1454.9 391.6 L1457.9 392.1 L1460.9 392.6 L1463.9 393.1 L1466.9 393.6 L1469.9 394.1 L1472.9 394.6 L1475.9 395.0 L1478.9 395.5 L1481.9 396.0 L1484.9 396.4 L1487.9 396.9 L1490.9 397.4 L1493.9 397.8 L1496.9 398.3 L1499.9 398.7 L1502.9 399.2 L1505.9 399.6 L1508.9 400.0 L1511.9 400.5 L1514.9 400.9 L1517.9 401.3 L1520.9 401.8 L1523.9 402.2 L1526.9 402.6 L1529.9 403.0 L1532.9 403.4 L1535.9 403.8 L1538.9 404.2 L1541.9 404.6 L1544.9 405.0 L1547.9 405.4 L1550.9 405.8 L1553.9 406.2 L1556.9 406.6 L1559.9 406.9 L1562.9 407.3 L1565.9 407.7 L1568.9 408.1 L1571.9 408.4 L1574.9 408.8 L1577.9 409.1 L1580.9 409.5 L1583.9 409.9 L1586.9 410.2 L1589.9 410.6 L1592.9 410.9 L1595.9 411.3 L1598.9 411.6 L1601.9 411.9 L1604.9 412.3 L1607.9 412.6 L1610.9 412.9 L1613.9 413.3 L1616.9 413.6 L1619.9 413.9 L1622.9 414.2 L1625.9 414.6 L1628.9 414.9 L1631.9 415.2 L1634.9 415.5 L1637.9 415.8 L1640.9 416.1 L1643.9 416.4 L1646.9 416.7 L1649.9 417.0 L1652.9 417.3 L1655.9 417.6 L1658.9 417.9 L1661.9 418.2 L1664.9 418.5 L1667.9 418.8 L1670.9 419.1 L1673.9 419.4 L1676.9 419.7 L1679.9 420.0 L1682.9 420.2 L1685.9 420.5 L1688.9 420.8 L1691.9 421.1 L1694.9 421.3 L1697.9 421.6 L1700.9 421.9 L1703.9 422.1 L1706.9 422.4 L1709.9 422.7 L1712.9 422.9 L1715.9 423.2 L1718.9 423.4 L1721.9 423.7 L1724.9 423.9 L1727.9 424.2 L1730.9 424.4 L1733.9 424.7 L1736.9 424.9 L1739.9 425.2 L1742.9 425.4 L1745.9 425.7 L1748.9 425.9 L1751.9 426.1 L1754.9 426.4 L1757.9 426.6 L1760.9 426.8 L1763.9 427.1 L1766.9 427.3 L1769.9 427.5 L1772.9 427.7 L1775.9 427.9 L1778.9 428.2 L1781.9 428.4 L1784.9 428.6 L1787.9 428.8 L1790.9 429.0 L1793.9 429.2 L1796.9 429.4 L1799.9 429.6 L1802.9 429.8 L1805.9 430.0 L1808.9 430.2 L1811.9 430.4 L1814.9 430.6 L1817.9 430.8 L1820.9 431.0 L1823.9 431.1 L1826.9 431.3 L1829.9 431.5 L1832.9 431.7 L1835.0 431.8" fill="none" stroke="#3a34c4" stroke-width="3"/><polygon points="1437.5,408.2 1476.7,402.1 1476.7,411 1437.5,417.8" fill="#b39099" opacity="0.95"/><circle cx="1469.4" cy="401.4" r="4.6" fill="#00f0f0" stroke="#000" stroke-width="1.3"/><rect x="1109.5" y="294.5" width="196" height="135.5" rx="6" fill="#eef2fa" fill-opacity="0.88" stroke="#5e6a7c" stroke-width="1.1"/><rect x="1119.2" y="304" width="3.8" height="15" fill="#a2e8a0"/><text x="1123.5" y="316.7" font-size="12.9" fill="#555">2,887.35 Realized PnL</text><rect x="1119.2" y="321.5" width="3.8" height="15" fill="#7ea0ec"/><text x="1123.5" y="333.7" font-size="12.9" fill="#444">+1</text><text x="1142" y="333.7" font-size="12.9" fill="#4a50e6">31jul. 5125 Put &#916;</text><text x="1291.5" y="333.7" font-size="12.9" fill="#4a50e6" text-anchor="end">-4.70</text><rect x="1119.2" y="338.4" width="3.8" height="15" fill="#7ea0ec"/><text x="1123.5" y="350.6" font-size="12.9" fill="#444">+2</text><text x="1142" y="350.6" font-size="12.9" fill="#4a50e6">20jun. 5175 Put &#916;</text><text x="1295.4" y="350.6" font-size="12.9" fill="#4a50e6" text-anchor="end">-0.75</text><rect x="1119.2" y="355.3" width="3.8" height="15" fill="#7ea0ec"/><text x="1123.5" y="367.5" font-size="12.9" fill="#444">+2</text><text x="1142" y="367.5" font-size="12.9" fill="#4a50e6">20jun. 5350 Put &#916;</text><text x="1295.4" y="367.5" font-size="12.9" fill="#4a50e6" text-anchor="end">-1.30</text><rect x="1119.2" y="372.2" width="3.8" height="15" fill="#7ea0ec"/><text x="1123.5" y="384.4" font-size="12.9" fill="#444">-4</text><text x="1138" y="384.4" font-size="12.9" fill="#f04848">20jun. 5300 Put &#916;</text><text x="1291.5" y="384.4" font-size="12.9" fill="#f04848" text-anchor="end">-1.10</text><rect x="1119.2" y="389.1" width="3.8" height="15" fill="#7ea0ec"/><text x="1123.5" y="401.3" font-size="12.9" fill="#444">+1</text><text x="1142" y="401.3" font-size="12.9" fill="#4a50e6">31jul. 5075 Put &#916;</text><text x="1291.5" y="401.3" font-size="12.9" fill="#4a50e6" text-anchor="end">-4.22</text><rect x="1119.2" y="406.0" width="3.8" height="15" fill="#7ea0ec"/><text x="1123.5" y="418.2" font-size="12.9" fill="#444">-2</text><text x="1138" y="418.2" font-size="12.9" fill="#f04848">20jun. 5675 Put &#916;</text><text x="1291.5" y="418.2" font-size="12.9" fill="#f04848" text-anchor="end">-5.00</text><rect x="1109.5" y="614.5" width="133.5" height="67.8" rx="6" fill="#eef2fa" fill-opacity="0.88" stroke="#5e6a7c" stroke-width="1.1"/><text x="1119.5" y="636.8" font-size="12.9" fill="#6a6ad2">20/06/2025 (0)</text><text x="1119.5" y="653.6" font-size="12.9" fill="#f25a5a">15/06/2025 (5) T+6</text><text x="1119.5" y="670.4" font-size="12.9" fill="#8eaef2">09/06/2025 (11) T+0</text><text x="1095.3" y="292.3" font-size="13" fill="#1a1a1a" text-anchor="end">6%</text><text x="1095.3" y="325.3" font-size="13" fill="#1a1a1a" text-anchor="end">4%</text><text x="1095.3" y="359.3" font-size="13" fill="#1a1a1a" text-anchor="end">3%</text><text x="1095.3" y="392.3" font-size="13" fill="#1a1a1a" text-anchor="end">1%</text><text x="1095.3" y="426.3" font-size="13" fill="#1a1a1a" text-anchor="end">0%</text><text x="1095.3" y="459.3" font-size="13" fill="#1a1a1a" text-anchor="end">-1%</text><text x="1095.3" y="493.3" font-size="13" fill="#1a1a1a" text-anchor="end">-3%</text><text x="1095.3" y="526.3" font-size="13" fill="#1a1a1a" text-anchor="end">-4%</text><text x="1095.3" y="559.3" font-size="13" fill="#1a1a1a" text-anchor="end">-6%</text><text x="1095.3" y="593.3" font-size="13" fill="#1a1a1a" text-anchor="end">-7%</text><text x="1095.3" y="626.3" font-size="13" fill="#1a1a1a" text-anchor="end">-9%</text><text x="1095.3" y="660.3" font-size="13" fill="#1a1a1a" text-anchor="end">-10%</text><text x="1095.3" y="693.3" font-size="13" fill="#1a1a1a" text-anchor="end">-12%</text><text x="1844" y="292.3" font-size="13" fill="#1a1a1a">2,000</text><text x="1844" y="325.3" font-size="13" fill="#1a1a1a">1,500</text><text x="1844" y="359.3" font-size="13" fill="#1a1a1a">1,000</text><text x="1844" y="392.3" font-size="13" fill="#1a1a1a">500</text><text x="1844" y="426.3" font-size="13" fill="#1a1a1a">0</text><text x="1844" y="459.3" font-size="13" fill="#1a1a1a">-500</text><text x="1844" y="493.3" font-size="13" fill="#1a1a1a">-1,000</text><text x="1844" y="526.3" font-size="13" fill="#1a1a1a">-1,500</text><text x="1844" y="559.3" font-size="13" fill="#1a1a1a">-2,000</text><text x="1844" y="593.3" font-size="13" fill="#1a1a1a">-2,500</text><text x="1844" y="626.3" font-size="13" fill="#1a1a1a">-3,000</text><text x="1844" y="660.3" font-size="13" fill="#1a1a1a">-3,500</text><text x="1844" y="693.3" font-size="13" fill="#1a1a1a">-4,000</text><text x="1156.5" y="280.8" font-size="13" fill="#1a1a1a" text-anchor="middle">-3.5%</text><text x="1229.5" y="280.8" font-size="13" fill="#1a1a1a" text-anchor="middle">-2.6%</text><text x="1302.5" y="280.8" font-size="13" fill="#1a1a1a" text-anchor="middle">-1.8%</text><text x="1375.5" y="280.8" font-size="13" fill="#1a1a1a" text-anchor="middle">-1.0%</text><text x="1448.5" y="280.8" font-size="13" fill="#1a1a1a" text-anchor="middle">-0.1%</text><text x="1521.5" y="280.8" font-size="13" fill="#1a1a1a" text-anchor="middle">0.7%</text><text x="1594.5" y="280.8" font-size="13" fill="#1a1a1a" text-anchor="middle">1.5%</text><text x="1668.5" y="280.8" font-size="13" fill="#1a1a1a" text-anchor="middle">2.4%</text><text x="1741.5" y="280.8" font-size="13" fill="#1a1a1a" text-anchor="middle">3.2%</text><text x="1814.5" y="280.8" font-size="13" fill="#1a1a1a" text-anchor="middle">4.0%</text><text x="1156.5" y="707" font-size="13" fill="#1a1a1a" text-anchor="middle">5800</text><text x="1229.5" y="707" font-size="13" fill="#1a1a1a" text-anchor="middle">5850</text><text x="1302.5" y="707" font-size="13" fill="#1a1a1a" text-anchor="middle">5900</text><text x="1375.5" y="707" font-size="13" fill="#1a1a1a" text-anchor="middle">5950</text><text x="1448.5" y="707" font-size="13" fill="#1a1a1a" text-anchor="middle">6000</text><text x="1521.5" y="707" font-size="13" fill="#1a1a1a" text-anchor="middle">6050</text><text x="1594.5" y="707" font-size="13" fill="#1a1a1a" text-anchor="middle">6100</text><text x="1668.5" y="707" font-size="13" fill="#1a1a1a" text-anchor="middle">6150</text><text x="1741.5" y="707" font-size="13" fill="#1a1a1a" text-anchor="middle">6200</text><text x="1814.5" y="707" font-size="13" fill="#1a1a1a" text-anchor="middle">6250</text><rect x="1041.7" y="391.8" width="56.2" height="16" fill="#008000"/><text x="1095" y="404.6" font-size="13" fill="#fff" text-anchor="end">1%</text><rect x="1841.7" y="391.8" width="59" height="16" fill="#008000"/><text x="1845" y="404.6" font-size="13" fill="#fff">300</text><rect x="1451.5" y="265.5" width="36" height="15" fill="#eef2fa" stroke="#2a3650" stroke-width="1"/><text x="1469.7" y="278.6" font-size="13" fill="#111" text-anchor="middle">0.1%</text><rect x="1039.5" y="715.8" width="859" height="229.7" rx="6" fill="#e8eef7" stroke="#5e6878" stroke-width="1.1"/><text x="1071.6" y="755.0999999999999" font-size="13" fill="#444" text-anchor="middle">PnL</text><text x="1870.7" y="755.0999999999999" font-size="13" fill="#444" text-anchor="middle">PnL</text><text x="1071.6" y="807.5999999999999" font-size="13" fill="#444" text-anchor="middle">Delta</text><text x="1870.7" y="807.5999999999999" font-size="13" fill="#444" text-anchor="middle">Delta</text><text x="1071.6" y="847.8" font-size="13" fill="#444" text-anchor="middle">Gamma</text><text x="1870.7" y="847.8" font-size="13" fill="#444" text-anchor="middle">Gamma</text><text x="1071.6" y="887.8" font-size="13" fill="#444" text-anchor="middle">Theta</text><text x="1870.7" y="887.8" font-size="13" fill="#444" text-anchor="middle">Theta</text><text x="1071.6" y="927.8" font-size="13" fill="#444" text-anchor="middle">Vega</text><text x="1870.7" y="927.8" font-size="13" fill="#444" text-anchor="middle">Vega</text><rect x="1104" y="749.4" width="89.5" height="12.899999999999977" fill="#f07878" stroke="#555" stroke-width="1.2"/><text x="1157.8" y="734.4" font-size="13" fill="#f05454" text-anchor="middle">-7%</text><text x="1157.8" y="749.3" font-size="13" fill="#f05454" text-anchor="middle">-2509</text><rect x="1193.5" y="749.4" width="73.0" height="6.899999999999977" fill="#f07878" stroke="#555" stroke-width="1.2"/><text x="1229.5" y="734.4" font-size="13" fill="#f05454" text-anchor="middle">-4%</text><text x="1229.5" y="749.3" font-size="13" fill="#f05454" text-anchor="middle">-1402</text><rect x="1266.5" y="749.4" width="73.0" height="2.8999999999999773" fill="#f07878" stroke="#555" stroke-width="1.2"/><text x="1302.5" y="734.4" font-size="13" fill="#f05454" text-anchor="middle">-2%</text><text x="1302.5" y="749.3" font-size="13" fill="#f05454" text-anchor="middle">-631</text><path d="M1339.5 749.4 H1412.5" stroke="#555" stroke-width="2"/><text x="1375.5" y="734.4" font-size="13" fill="#f05454" text-anchor="middle">0%</text><text x="1375.5" y="749.3" font-size="13" fill="#f05454" text-anchor="middle">-135</text><path d="M1412.5 749.4 H1485.5" stroke="#555" stroke-width="2"/><path d="M1485.5 749.4 H1558.5" stroke="#555" stroke-width="2"/><text x="1521.5" y="762.1999999999999" font-size="13" fill="#5a64e6" text-anchor="middle">280</text><text x="1521.5" y="774.5999999999999" font-size="13" fill="#5a64e6" text-anchor="middle">1%</text><rect x="1558.5" y="747.4" width="73.0" height="2.0" fill="#5b7cf5" stroke="#555" stroke-width="1.2"/><text x="1594.5" y="762.1999999999999" font-size="13" fill="#5a64e6" text-anchor="middle">309</text><text x="1594.5" y="774.5999999999999" font-size="13" fill="#5a64e6" text-anchor="middle">1%</text><path d="M1631.5 749.4 H1705" stroke="#555" stroke-width="2"/><text x="1668.5" y="762.1999999999999" font-size="13" fill="#5a64e6" text-anchor="middle">275</text><text x="1668.5" y="774.5999999999999" font-size="13" fill="#5a64e6" text-anchor="middle">1%</text><path d="M1705 749.4 H1778" stroke="#555" stroke-width="2"/><text x="1741.5" y="762.1999999999999" font-size="13" fill="#5a64e6" text-anchor="middle">208</text><text x="1741.5" y="774.5999999999999" font-size="13" fill="#5a64e6" text-anchor="middle">1%</text><path d="M1778 749.4 H1837" stroke="#555" stroke-width="2"/><text x="1814.5" y="762.1999999999999" font-size="13" fill="#5a64e6" text-anchor="middle">128</text><text x="1814.5" y="774.5999999999999" font-size="13" fill="#5a64e6" text-anchor="middle">0%</text><text x="1448.5" y="762.1999999999999" font-size="13" fill="#d6dcf6" text-anchor="middle">149</text><text x="1448.5" y="774.5999999999999" font-size="13" fill="#d6dcf6" text-anchor="middle">0%</text><rect x="1104" y="789.6" width="89.5" height="12.899999999999977" fill="#5b7cf5" stroke="#555" stroke-width="1.2"/><text x="1157.8" y="815.4" font-size="13" fill="#5a64e6" text-anchor="middle">25.86</text><rect x="1193.5" y="793.3" width="73.0" height="9.200000000000045" fill="#5b7cf5" stroke="#555" stroke-width="1.2"/><text x="1229.5" y="815.4" font-size="13" fill="#5a64e6" text-anchor="middle">18.59</text><rect x="1266.5" y="796.5" width="73.0" height="6.0" fill="#5b7cf5" stroke="#555" stroke-width="1.2"/><text x="1302.5" y="815.4" font-size="13" fill="#5a64e6" text-anchor="middle">12.45</text><rect x="1339.5" y="798.8" width="73.0" height="3.7000000000000455" fill="#5b7cf5" stroke="#555" stroke-width="1.2"/><text x="1375.5" y="815.4" font-size="13" fill="#5a64e6" text-anchor="middle">7.58</text><rect x="1412.5" y="800.6" width="73.0" height="1.8999999999999773" fill="#5b7cf5" stroke="#555" stroke-width="1.2"/><text x="1448.5" y="815.4" font-size="13" fill="#c8d0f4" text-anchor="middle">3.96</text><path d="M1485.5 802.5 H1558.5" stroke="#555" stroke-width="2"/><text x="1521.5" y="815.4" font-size="13" fill="#5a64e6" text-anchor="middle">1.45</text><path d="M1558.5 802.5 H1631.5" stroke="#555" stroke-width="2"/><text x="1594.5" y="801.8" font-size="13" fill="#f05454" text-anchor="middle">-0.16</text><path d="M1631.5 802.5 H1705" stroke="#555" stroke-width="2"/><text x="1668.5" y="801.8" font-size="13" fill="#f05454" text-anchor="middle">-1.08</text><path d="M1705 802.5 H1778" stroke="#555" stroke-width="2"/><text x="1741.5" y="801.8" font-size="13" fill="#f05454" text-anchor="middle">-1.53</text><path d="M1778 802.5 H1837" stroke="#555" stroke-width="2"/><text x="1814.5" y="801.8" font-size="13" fill="#f05454" text-anchor="middle">-1.67</text><rect x="1104" y="842.2" width="89.5" height="12.799999999999955" fill="#f07878" stroke="#555" stroke-width="1.2"/><text x="1157.8" y="841.8" font-size="13" fill="#f05454" text-anchor="middle">-0.15</text><rect x="1193.5" y="842.2" width="73.0" height="10.299999999999955" fill="#f07878" stroke="#555" stroke-width="1.2"/><text x="1229.5" y="841.8" font-size="13" fill="#f05454" text-anchor="middle">-0.13</text><rect x="1266.5" y="842.2" width="73.0" height="7.7999999999999545" fill="#f07878" stroke="#555" stroke-width="1.2"/><text x="1302.5" y="841.8" font-size="13" fill="#f05454" text-anchor="middle">-0.11</text><rect x="1339.5" y="842.2" width="73.0" height="5.2999999999999545" fill="#f07878" stroke="#555" stroke-width="1.2"/><text x="1375.5" y="841.8" font-size="13" fill="#f05454" text-anchor="middle">-0.08</text><rect x="1412.5" y="842.2" width="73.0" height="3.2999999999999545" fill="#f07878" stroke="#555" stroke-width="1.2"/><text x="1448.5" y="841.8" font-size="13" fill="#f4c8c8" text-anchor="middle">-0.06</text><rect x="1485.5" y="842.2" width="73.0" height="2.2999999999999545" fill="#f07878" stroke="#555" stroke-width="1.2"/><text x="1521.5" y="841.8" font-size="13" fill="#f05454" text-anchor="middle">-0.04</text><path d="M1558.5 842.2 H1631.5" stroke="#555" stroke-width="2"/><text x="1594.5" y="841.8" font-size="13" fill="#f05454" text-anchor="middle">-0.02</text><path d="M1631.5 842.2 H1705" stroke="#555" stroke-width="2"/><text x="1668.5" y="841.8" font-size="13" fill="#f05454" text-anchor="middle">-0.01</text><path d="M1705 842.2 H1778" stroke="#555" stroke-width="2"/><text x="1741.5" y="841.8" font-size="13" fill="#f05454" text-anchor="middle">-0.01</text><path d="M1778 842.2 H1837" stroke="#555" stroke-width="2"/><text x="1814.5" y="854.8" font-size="13" fill="#5a64e6" text-anchor="middle">0.00</text><rect x="1104" y="869.4" width="89.5" height="13.0" fill="#5b7cf5" stroke="#555" stroke-width="1.2"/><text x="1157.8" y="894.8" font-size="13" fill="#5a64e6" text-anchor="middle">251.23</text><rect x="1193.5" y="871.5" width="73.0" height="10.899999999999977" fill="#5b7cf5" stroke="#555" stroke-width="1.2"/><text x="1229.5" y="894.8" font-size="13" fill="#5a64e6" text-anchor="middle">223.44</text><rect x="1266.5" y="873.8" width="73.0" height="8.600000000000023" fill="#5b7cf5" stroke="#555" stroke-width="1.2"/><text x="1302.5" y="894.8" font-size="13" fill="#5a64e6" text-anchor="middle">184.23</text><rect x="1339.5" y="876.5" width="73.0" height="5.899999999999977" fill="#5b7cf5" stroke="#555" stroke-width="1.2"/><text x="1375.5" y="894.8" font-size="13" fill="#5a64e6" text-anchor="middle">140.23</text><rect x="1412.5" y="878.8" width="73.0" height="3.6000000000000227" fill="#5b7cf5" stroke="#555" stroke-width="1.2"/><text x="1448.5" y="894.8" font-size="13" fill="#c8d0f4" text-anchor="middle">97.55</text><rect x="1485.5" y="879.5" width="73.0" height="2.8999999999999773" fill="#5b7cf5" stroke="#555" stroke-width="1.2"/><text x="1521.5" y="894.8" font-size="13" fill="#5a64e6" text-anchor="middle">59.83</text><rect x="1558.5" y="880.5" width="73.0" height="1.8999999999999773" fill="#5b7cf5" stroke="#555" stroke-width="1.2"/><text x="1594.5" y="894.8" font-size="13" fill="#5a64e6" text-anchor="middle">29.92</text><path d="M1631.5 882.4 H1705" stroke="#555" stroke-width="2"/><text x="1668.5" y="894.8" font-size="13" fill="#5a64e6" text-anchor="middle">8.13</text><path d="M1705 882.4 H1778" stroke="#555" stroke-width="2"/><text x="1741.5" y="881.3" font-size="13" fill="#f05454" text-anchor="middle">-6.29</text><path d="M1778 882.4 H1837" stroke="#555" stroke-width="2"/><text x="1814.5" y="881.3" font-size="13" fill="#f05454" text-anchor="middle">-14.76</text><path d="M1104 922.6 H1193.5" stroke="#555" stroke-width="2"/><text x="1157.8" y="921.3" font-size="13" fill="#f05454" text-anchor="middle">-8.76</text><path d="M1193.5 922.6 H1266.5" stroke="#555" stroke-width="2"/><text x="1229.5" y="934.5999999999999" font-size="13" fill="#5a64e6" text-anchor="middle">0.01</text><rect x="1266.5" y="920.3" width="73.0" height="2.300000000000068" fill="#5b7cf5" stroke="#555" stroke-width="1.2"/><text x="1302.5" y="934.5999999999999" font-size="13" fill="#5a64e6" text-anchor="middle">21.07</text><rect x="1339.5" y="917.4" width="73.0" height="5.2000000000000455" fill="#5b7cf5" stroke="#555" stroke-width="1.2"/><text x="1375.5" y="934.5999999999999" font-size="13" fill="#5a64e6" text-anchor="middle">47.59</text><rect x="1412.5" y="914.2" width="73.0" height="8.399999999999977" fill="#5b7cf5" stroke="#555" stroke-width="1.2"/><text x="1448.5" y="934.5999999999999" font-size="13" fill="#c8d0f4" text-anchor="middle">73.55</text><rect x="1485.5" y="912.5" width="73.0" height="10.100000000000023" fill="#5b7cf5" stroke="#555" stroke-width="1.2"/><text x="1521.5" y="934.5999999999999" font-size="13" fill="#5a64e6" text-anchor="middle">94.64</text><rect x="1558.5" y="910.5" width="73.0" height="12.100000000000023" fill="#5b7cf5" stroke="#555" stroke-width="1.2"/><text x="1594.5" y="934.5999999999999" font-size="13" fill="#5a64e6" text-anchor="middle">108.73</text><rect x="1631.5" y="909.4" width="73.5" height="13.200000000000045" fill="#5b7cf5" stroke="#555" stroke-width="1.2"/><text x="1668.5" y="934.5999999999999" font-size="13" fill="#5a64e6" text-anchor="middle">115.43</text><rect x="1705" y="909.4" width="73" height="13.200000000000045" fill="#5b7cf5" stroke="#555" stroke-width="1.2"/><text x="1741.5" y="934.5999999999999" font-size="13" fill="#5a64e6" text-anchor="middle">115.62</text><rect x="1778" y="910.5" width="59" height="12.100000000000023" fill="#5b7cf5" stroke="#555" stroke-width="1.2"/><text x="1814.5" y="934.5999999999999" font-size="13" fill="#5a64e6" text-anchor="middle">110.85</text><rect x="1438.5" y="694.5" width="60.5" height="249" rx="6" fill="#e6ecf6" fill-opacity="0.9" stroke="#5e6878" stroke-width="1.1"/><text x="1469" y="707.5999999999999" font-size="13" fill="#111" text-anchor="middle">6014.25</text><text x="1469" y="749.0" font-size="13" fill="#1a1ae0" text-anchor="middle">300</text><text x="1469" y="768.4" font-size="13" fill="#1a1ae0" text-anchor="middle">0.9%</text><text x="1469" y="808.0999999999999" font-size="13" fill="#1a1ae0" text-anchor="middle">3.14</text><text x="1469" y="848.0" font-size="13" fill="#f01010" text-anchor="middle">-0.05</text><text x="1469" y="887.9" font-size="13" fill="#1a1ae0" text-anchor="middle">85.97</text><text x="1469" y="927.9" font-size="13" fill="#1a1ae0" text-anchor="middle">80.17</text><rect x="1034" y="950" width="872" height="32" fill="#28354f"/><text x="1683" y="971" font-size="15" fill="#fff">360%</text><path d="M1731 966 H1740" stroke="#ccc" stroke-width="1.2"/><path d="M1747 966 H1878" stroke="#e8e2b8" stroke-width="1.5"/><path d="M1812.5 961 V971" stroke="#ccc" stroke-width="1"/><rect x="1851.5" y="959" width="4" height="13" fill="#f4e8a8"/><path d="M1884 966 H1893 M1888.5 961.5 V970.5" stroke="#ccc" stroke-width="1.2"/></svg>
</body></html>
